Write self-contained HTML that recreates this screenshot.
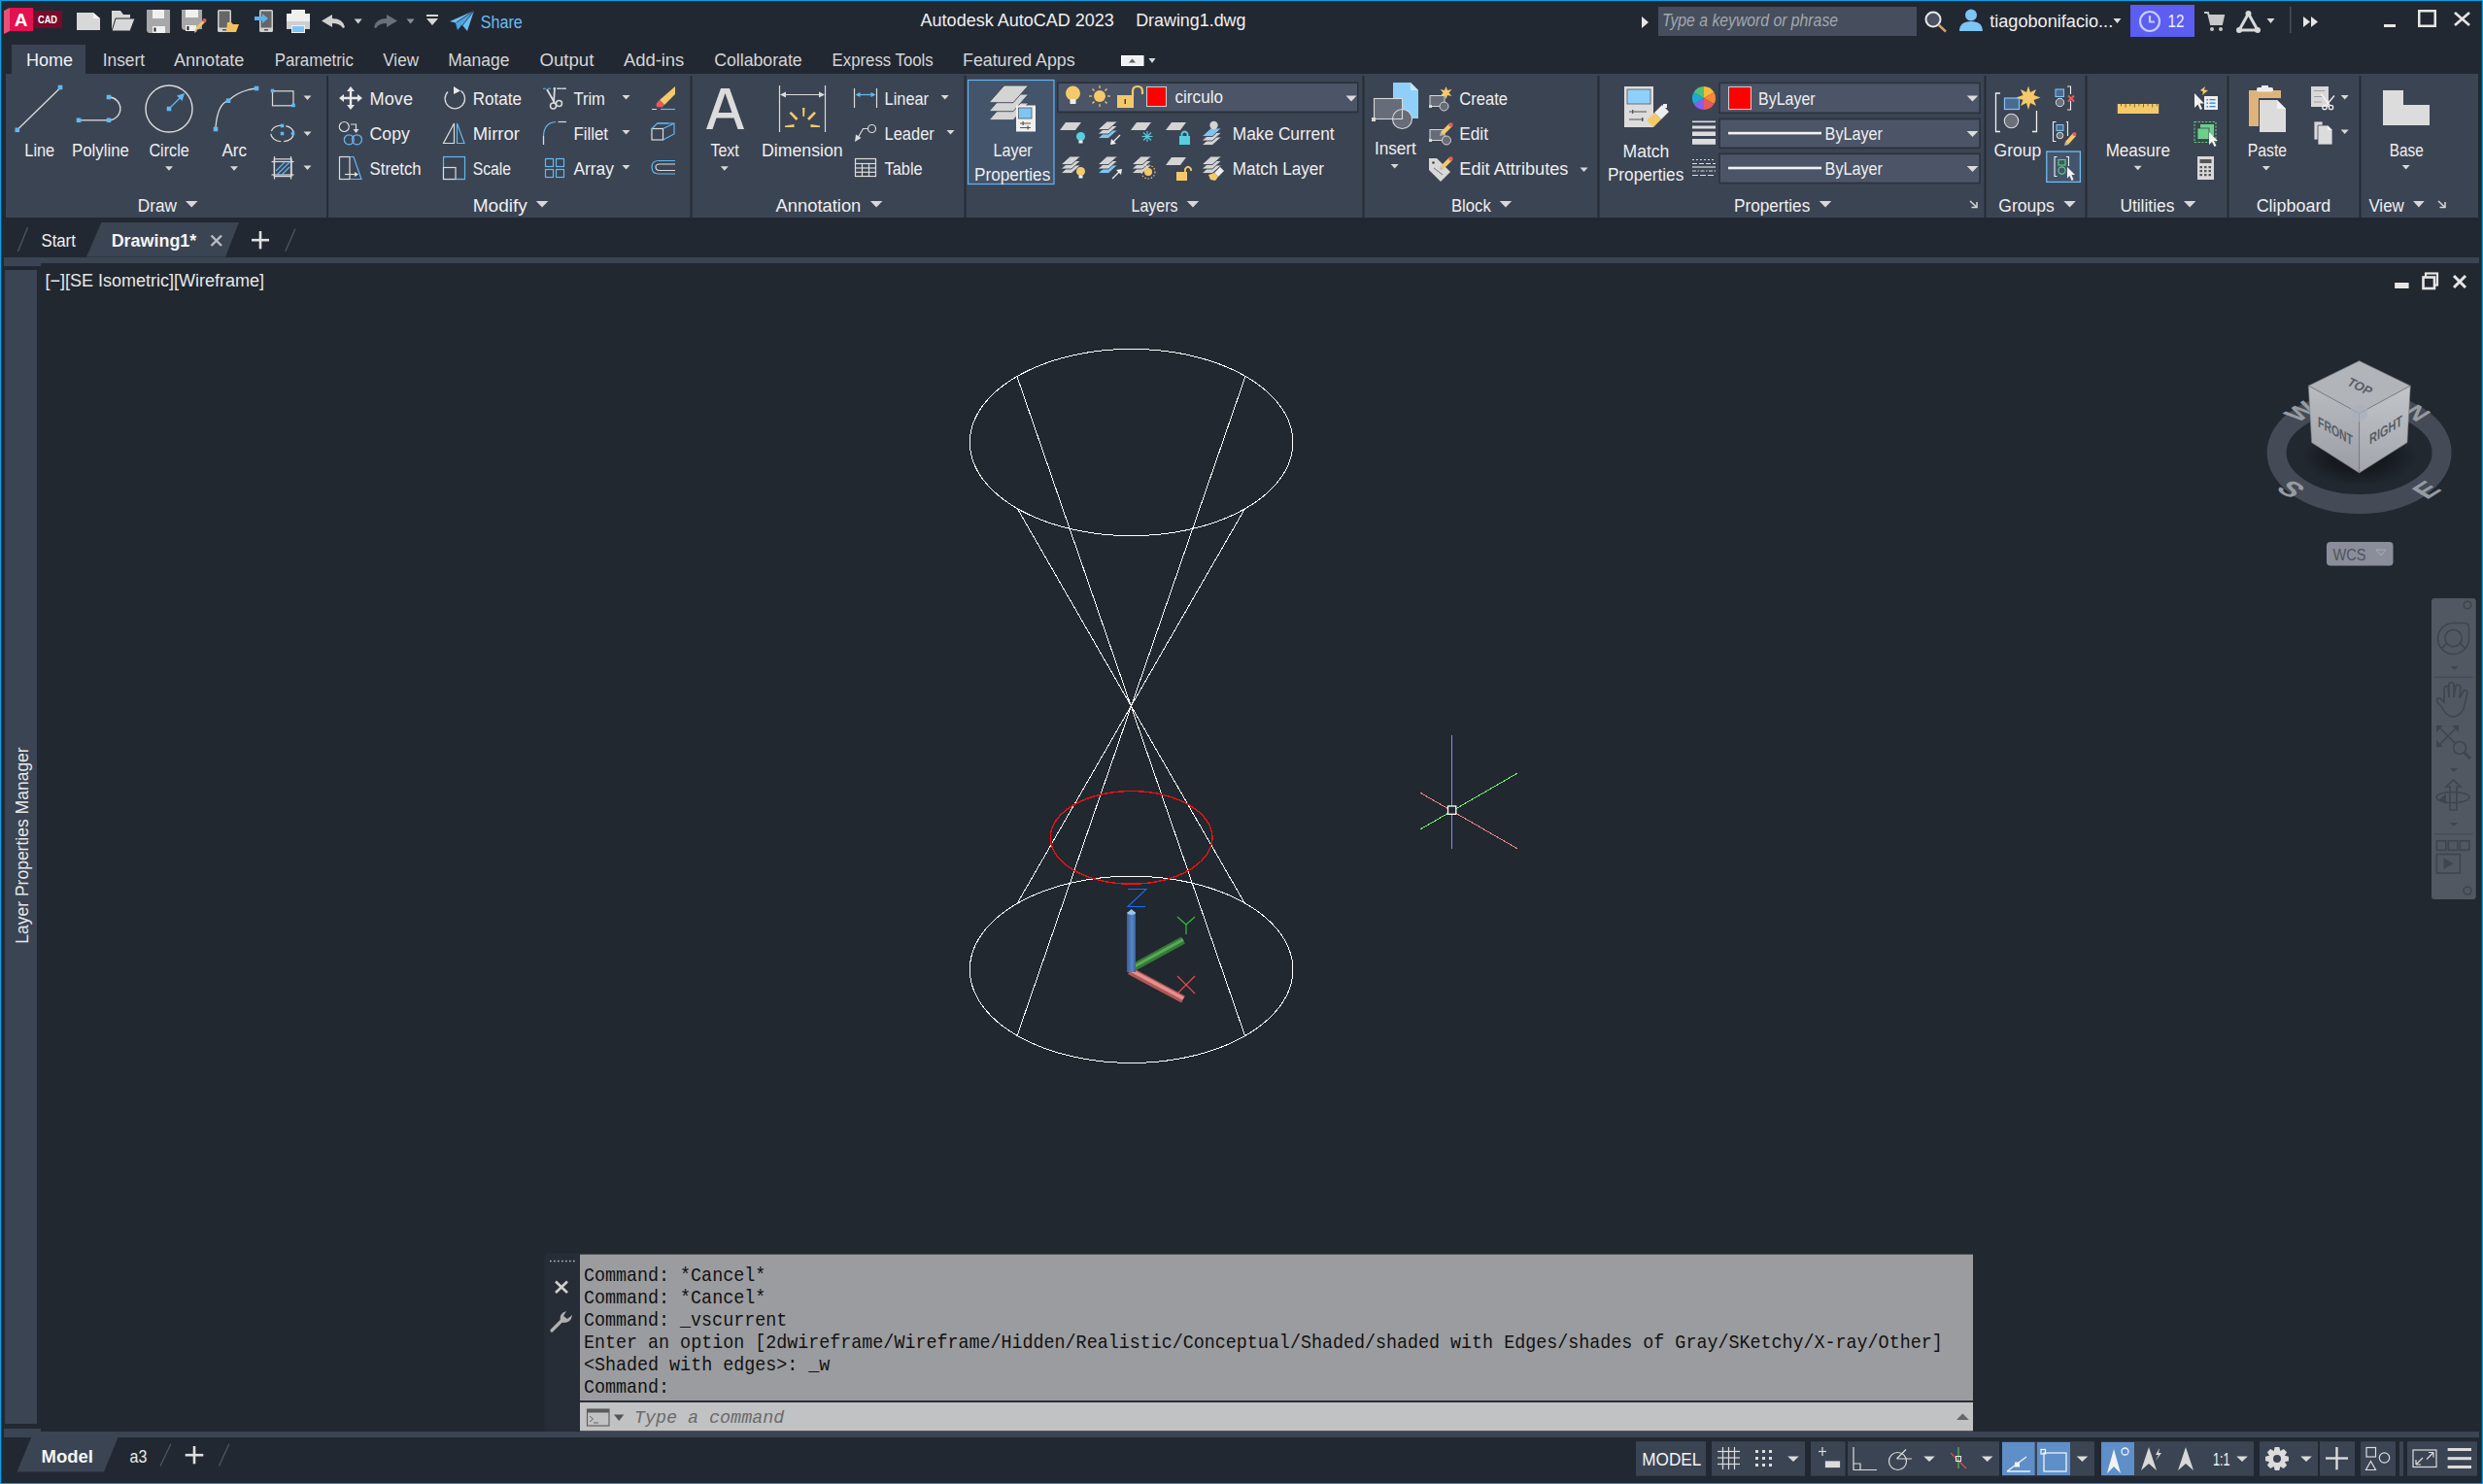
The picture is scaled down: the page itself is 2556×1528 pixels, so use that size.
<!DOCTYPE html>
<html><head><meta charset="utf-8"><style>
html,body{margin:0;padding:0;width:2556px;height:1528px;overflow:hidden;background:#222832;}
svg{display:block}
</style></head><body>
<svg width="2556" height="1528" viewBox="0 0 2556 1528">
<rect x="0" y="0" width="2556" height="1528" fill="#222832" />
<rect x="42" y="274" width="2512" height="1197" fill="#212830" />
<rect x="6" y="76" width="2545" height="148" fill="#3b4453" />
<rect x="12" y="46" width="76" height="30" fill="#3b4453" />
<rect x="4" y="265" width="2548" height="6" fill="#3b4453" />
<rect x="4" y="271" width="38" height="3" fill="#3b4453" />
<rect x="5" y="278" width="33" height="1188" fill="#3b4453" />
<rect x="4" y="1471" width="38" height="3" fill="#3b4453" />
<rect x="4" y="1474" width="2548" height="6" fill="#3b4453" />
<rect x="0" y="0" width="2556" height="1" fill="#0aa0e8" />
<rect x="0" y="0" width="1.2" height="1528" fill="#0aa0e8" />
<rect x="2554.8" y="0" width="1.2" height="1528" fill="#0aa0e8" />
<rect x="0" y="1527" width="2556" height="1" fill="#0aa0e8" />
<g transform="translate(3,7)">
<polygon points="1,4 7,1 7,25 1,28" fill="#e8507a"/>
<rect x="7" y="1" width="24" height="24" fill="#e3114f"/>
<rect x="31" y="4" width="30" height="18" fill="#790a2a"/>
<text x="18.7" y="19.7" font-family="Liberation Sans" font-weight="bold" font-size="19" fill="#fff" text-anchor="middle">A</text>
<text x="46" y="16.7" font-family="Liberation Sans" font-weight="bold" font-size="10" fill="#fff" text-anchor="middle" textLength="20" lengthAdjust="spacingAndGlyphs">CAD</text>
</g>
<g transform="translate(79,13)"><polygon points="0,0 17,0 24,6 24,18 0,18" fill="#d8d8d8"/><polygon points="17,0 24,6 17,6" fill="#f2f2f2"/></g>
<g transform="translate(115,11)"><polygon points="0,0 9,0 12,4 19,4 19,8 0,21" fill="#d8d8d8"/><polygon points="4,8 24,8 19,21 0,21" fill="#d8d8d8" stroke="#222832" stroke-width="1"/></g>
<g transform="translate(151,10)"><polygon points="0,0 24,0 24,24 2,24 0,22" fill="#a8a8a8"/><rect x="6" y="0" width="12" height="9" fill="#f0f0f0"/><rect x="6" y="17" width="13" height="7" fill="#f0f0f0"/><rect x="7.5" y="18.5" width="2" height="4" fill="#222"/></g>
<g transform="translate(187,10)"><polygon points="0,0 21,0 21,20 2,21 0,19" fill="#a8a8a8"/><rect x="4" y="0" width="13" height="8" fill="#f0f0f0"/><rect x="4" y="16" width="11" height="6" fill="#f0f0f0"/><rect x="5.5" y="17" width="2" height="4" fill="#222"/><polygon points="13,23 15,18 23,10 25,12 17,20" fill="#f2c462"/><circle cx="23.5" cy="11" r="2" fill="#e85a5a"/><polygon points="13,24 14,20 16,22" fill="#bbb"/></g>
<g transform="translate(224,10)"><rect x="0" y="0" width="14" height="23" rx="1.5" fill="#cfcfcf"/><rect x="1.5" y="1.5" width="11" height="17" fill="#666"/><rect x="5" y="20" width="4" height="1.5" fill="#555"/><polygon points="10,13 14,13 16,15 22,15 19,23 9,23" fill="#f4c15f"/></g>
<g transform="translate(262,10)"><rect x="5" y="0" width="14" height="23" rx="1.5" fill="#cfcfcf"/><rect x="6.5" y="1.5" width="11" height="17" fill="#666"/><rect x="10" y="20" width="4" height="1.5" fill="#555"/><polygon points="0,7 8,7 8,4 14,9 8,14 8,11 0,11" fill="#5ab4ee"/></g>
<g transform="translate(295,10)"><rect x="5" y="0" width="14" height="6" fill="#f0f0f0"/><rect x="0" y="4" width="24" height="9" fill="#f0f0f0"/><rect x="0" y="12" width="24" height="8" fill="#cfcfcf"/><rect x="5" y="16" width="14" height="8" fill="#f0f0f0"/><rect x="6" y="17" width="12" height="6" fill="#7cc5f5"/></g>
<g transform="translate(331,15)"><path d="M0,6.5 L11,0 L11,4 Q22,4 24,13 L22,14 Q19,9 11,9 L11,13 Z" fill="#d0d0d0"/></g>
<polygon points="364.7,19.6 372.7,19.6 368.7,24.6" fill="#cfcfcf"/>
<g transform="translate(385,15)"><path d="M24,6.5 L13,0 L13,4 Q2,4 0,13 L2,14 Q5,9 13,9 L13,13 Z" fill="#6b6f77"/></g>
<polygon points="418.6,19.6 426.6,19.6 422.6,24.6" fill="#8b8e94"/>
<g transform="translate(439,15)"><rect x="0" y="0" width="12" height="2" fill="#d8d8d8"/><polygon points="0,4 12,4 6,11" fill="#d8d8d8"/></g>
<g transform="translate(463,11)"><polygon points="0,11 25,0 18,21 12,14" fill="#6cbdf3"/><polygon points="6,13 25,0 8,20" fill="#4aa4e0"/><polyline points="7,12 25,0 10,19" fill="none" stroke="#222832" stroke-width="0.8"/></g>
<text x="494.70" y="29" font-family="Liberation Sans" font-size="18" fill="#6cbdf3" font-weight="normal" font-style="normal" textLength="43.08" lengthAdjust="spacingAndGlyphs" >Share</text>
<text x="947.60" y="27" font-family="Liberation Sans" font-size="18" fill="#f0f0f0" font-weight="normal" font-style="normal" textLength="199.17" lengthAdjust="spacingAndGlyphs" >Autodesk AutoCAD 2023</text>
<text x="1169.20" y="27" font-family="Liberation Sans" font-size="18" fill="#f0f0f0" font-weight="normal" font-style="normal" textLength="113.23" lengthAdjust="spacingAndGlyphs" >Drawing1.dwg</text>
<g transform="translate(1690,17)"><polygon points="0,0 7,6 0,12" fill="#e6e6e6"/></g>
<rect x="1707" y="7" width="266" height="30" fill="#464e5d" />
<text x="1711.00" y="27" font-family="Liberation Sans" font-size="18" fill="#a3a7ae" font-weight="normal" font-style="italic" textLength="181.03" lengthAdjust="spacingAndGlyphs" >Type a keyword or phrase</text>
<g transform="translate(1981,11)"><circle cx="9" cy="9" r="7.5" fill="#4b5260" stroke="#e8e8e8" stroke-width="2"/><line x1="14.5" y1="14.5" x2="22" y2="21.5" stroke="#d4a16a" stroke-width="2.4"/></g>
<g transform="translate(2017,9)"><circle cx="12" cy="6.5" r="6" fill="#7cc5f5"/><path d="M0,23 Q0,13 12,13 Q24,13 24,23 Z" fill="#7cc5f5"/></g>
<text x="2048.20" y="28" font-family="Liberation Sans" font-size="18" fill="#f0f0f0" font-weight="normal" font-style="normal" textLength="127.00" lengthAdjust="spacingAndGlyphs" >tiagobonifacio...</text>
<polygon points="2175.5,19 2183.5,19 2179.5,24" fill="#e0e0e0"/>
<rect x="2193" y="5" width="66" height="33" fill="#5b5ef0" />
<g transform="translate(2201,10)"><circle cx="12" cy="12" r="10" fill="none" stroke="#c8cbff" stroke-width="2.2"/><polyline points="12,6 12,12.5 17,12.5" fill="none" stroke="#c8cbff" stroke-width="2.2"/></g>
<text x="2231.50" y="28" font-family="Liberation Sans" font-size="18" fill="#f0f0ff" font-weight="normal" font-style="normal" textLength="16.84" lengthAdjust="spacingAndGlyphs" >12</text>
<g transform="translate(2269,12)"><path d="M0,1 L4,1 L7,13 L18,13 L20,4 L5,4" fill="none" stroke="#c8c8c8" stroke-width="2"/><rect x="6" y="5" width="13" height="7" fill="#c8c8c8"/><circle cx="8" cy="18" r="2" fill="#c8c8c8"/><circle cx="17" cy="18" r="2" fill="#c8c8c8"/></g>
<g transform="translate(2302,11)"><path d="M12.5,3 L3,20 L22,20 Z" fill="none" stroke="#d8d8d8" stroke-width="3" stroke-linejoin="round"/><circle cx="12.5" cy="3" r="3" fill="#d8d8d8"/><circle cx="3" cy="20" r="3" fill="#d8d8d8"/><circle cx="22" cy="20" r="3" fill="#d8d8d8"/></g>
<polygon points="2333.5,19 2341.5,19 2337.5,24" fill="#d8d8d8"/>
<rect x="2357" y="7" width="1.5" height="27" fill="#4a505b" />
<g transform="translate(2371,17)"><polygon points="0,0 7,5.5 0,11" fill="#e6e6e6"/><polygon points="8,0 15,5.5 8,11" fill="#e6e6e6"/></g>
<rect x="2454" y="25" width="12" height="3" fill="#e6e6e6" />
<g transform="translate(2489,10)"><rect x="1.25" y="1.25" width="16.5" height="15.5" fill="none" stroke="#e6e6e6" stroke-width="2.5"/></g>
<g transform="translate(2526,12)"><line x1="1" y1="1" x2="16" y2="14" stroke="#e6e6e6" stroke-width="2.6"/><line x1="16" y1="1" x2="1" y2="14" stroke="#e6e6e6" stroke-width="2.6"/></g>
<text x="27.00" y="68" font-family="Liberation Sans" font-size="18" fill="#f2f2f2" font-weight="normal" font-style="normal" textLength="47.96" lengthAdjust="spacingAndGlyphs" >Home</text>
<text x="105.70" y="68" font-family="Liberation Sans" font-size="18" fill="#d6d6d6" font-weight="normal" font-style="normal" textLength="43.32" lengthAdjust="spacingAndGlyphs" >Insert</text>
<text x="179.00" y="68" font-family="Liberation Sans" font-size="18" fill="#d6d6d6" font-weight="normal" font-style="normal" textLength="72.27" lengthAdjust="spacingAndGlyphs" >Annotate</text>
<text x="282.70" y="68" font-family="Liberation Sans" font-size="18" fill="#d6d6d6" font-weight="normal" font-style="normal" textLength="81.29" lengthAdjust="spacingAndGlyphs" >Parametric</text>
<text x="394.30" y="68" font-family="Liberation Sans" font-size="18" fill="#d6d6d6" font-weight="normal" font-style="normal" textLength="36.69" lengthAdjust="spacingAndGlyphs" >View</text>
<text x="461.30" y="68" font-family="Liberation Sans" font-size="18" fill="#d6d6d6" font-weight="normal" font-style="normal" textLength="63.18" lengthAdjust="spacingAndGlyphs" >Manage</text>
<text x="555.40" y="68" font-family="Liberation Sans" font-size="18" fill="#d6d6d6" font-weight="normal" font-style="normal" textLength="55.94" lengthAdjust="spacingAndGlyphs" >Output</text>
<text x="641.90" y="68" font-family="Liberation Sans" font-size="18" fill="#d6d6d6" font-weight="normal" font-style="normal" textLength="62.41" lengthAdjust="spacingAndGlyphs" >Add-ins</text>
<text x="735.20" y="68" font-family="Liberation Sans" font-size="18" fill="#d6d6d6" font-weight="normal" font-style="normal" textLength="90.49" lengthAdjust="spacingAndGlyphs" >Collaborate</text>
<text x="856.60" y="68" font-family="Liberation Sans" font-size="18" fill="#d6d6d6" font-weight="normal" font-style="normal" textLength="104.13" lengthAdjust="spacingAndGlyphs" >Express Tools</text>
<text x="991.10" y="68" font-family="Liberation Sans" font-size="18" fill="#d6d6d6" font-weight="normal" font-style="normal" textLength="115.49" lengthAdjust="spacingAndGlyphs" >Featured Apps</text>
<rect x="1154" y="57" width="23.5" height="11" fill="#ffffff" />
<rect x="1155.2" y="58.2" width="21.1" height="8.6" fill="#f0f0f0" />
<g transform="translate(1162,60.5)"><polygon points="0,4 7,4 3.5,0" fill="#606060"/></g>
<polygon points="1182.5,60 1189.5,60 1186,65" fill="#d8d8d8"/>
<rect x="336" y="78" width="2" height="146" fill="#262b35" />
<rect x="710.5" y="78" width="2" height="146" fill="#262b35" />
<rect x="992.5" y="78" width="2" height="146" fill="#262b35" />
<rect x="1402.5" y="78" width="2" height="146" fill="#262b35" />
<rect x="1644.5" y="78" width="2" height="146" fill="#262b35" />
<rect x="2042.5" y="78" width="2" height="146" fill="#262b35" />
<rect x="2146.5" y="78" width="2" height="146" fill="#262b35" />
<rect x="2292.5" y="78" width="2" height="146" fill="#262b35" />
<rect x="2428.5" y="78" width="2" height="146" fill="#262b35" />
<text x="141.80" y="218" font-family="Liberation Sans" font-size="18" fill="#efefef" font-weight="normal" font-style="normal" textLength="40.18" lengthAdjust="spacingAndGlyphs" >Draw</text>
<g transform="translate(191,207)"><polygon points="0,0 12.5,0 6.25,6.5" fill="#d8d8d8"/></g>

<line x1="19" y1="132.5" x2="61" y2="91.5" stroke="#dcdcdc" stroke-width="1.3"/><rect x="15.5" y="131.5" width="4.6" height="4.6" fill="#62b8f0"/><rect x="59.7" y="87.7" width="4.6" height="4.6" fill="#62b8f0"/>
<line x1="82" y1="123.8" x2="111" y2="123.8" stroke="#dcdcdc" stroke-width="1.3"/><path d="M113,100 A12.5,12 0 0 1 113,123.8" fill="none" stroke="#dcdcdc" stroke-width="1.3"/><rect x="78.7" y="121.5" width="4.6" height="4.6" fill="#62b8f0"/><rect x="109.7" y="121.5" width="4.6" height="4.6" fill="#62b8f0"/><rect x="109.7" y="97.7" width="4.6" height="4.6" fill="#62b8f0"/>
<circle cx="174" cy="112" r="24" fill="none" stroke="#dcdcdc" stroke-width="1.4"/><rect x="171.7" y="109.7" width="4.6" height="4.6" fill="#62b8f0"/><line x1="176" y1="110" x2="186" y2="100" stroke="#62b8f0" stroke-width="1.3"/><polygon points="190,96 187.5,104 182,98.5" fill="#62b8f0"/>
<path d="M222,131 Q224,107 235,103.7 Q246,93 264,91" fill="none" stroke="#dcdcdc" stroke-width="1.3"/><rect x="219.7" y="130.7" width="4.6" height="4.6" fill="#62b8f0"/><rect x="232.7" y="101.4" width="4.6" height="4.6" fill="#62b8f0"/><rect x="261.7" y="88.7" width="4.6" height="4.6" fill="#62b8f0"/>
<rect x="280.5" y="93.8" width="21.5" height="15" fill="none" stroke="#dcdcdc" stroke-width="1.2"/><rect x="278.7" y="91.7" width="3.6" height="3.6" fill="#62b8f0"/><rect x="300.2" y="106.7" width="3.6" height="3.6" fill="#62b8f0"/>
<ellipse cx="290.5" cy="137.5" rx="11.7" ry="8.3" fill="none" stroke="#dcdcdc" stroke-width="1.2" stroke-dasharray="14,3"/><rect x="288.75" y="127.75" width="3.5" height="3.5" fill="#62b8f0"/><rect x="288.75" y="135.75" width="3.5" height="3.5" fill="#62b8f0"/><rect x="299.75" y="135.75" width="3.5" height="3.5" fill="#62b8f0"/>
<rect x="282.3" y="163.8" width="17.8" height="17.8" fill="none" stroke="#dcdcdc" stroke-width="1.2"/><line x1="279.5" y1="166.5" x2="302.5" y2="166.5" stroke="#dcdcdc" stroke-width="1.2"/><line x1="279.5" y1="180" x2="302.5" y2="180" stroke="#dcdcdc" stroke-width="1.2"/><line x1="282.5" y1="161" x2="282.5" y2="184.5" stroke="#dcdcdc" stroke-width="1.2"/><line x1="299.5" y1="161" x2="299.5" y2="184.5" stroke="#dcdcdc" stroke-width="1.2"/>
<path d="M284,176 L293,167 M285,180 L298,167 M290,180 L298,172" stroke="#62b8f0" stroke-width="1.2"/>

<text x="25.30" y="161" font-family="Liberation Sans" font-size="18" fill="#efefef" font-weight="normal" font-style="normal" textLength="30.91" lengthAdjust="spacingAndGlyphs" >Line</text>
<text x="74.00" y="161" font-family="Liberation Sans" font-size="18" fill="#efefef" font-weight="normal" font-style="normal" textLength="58.94" lengthAdjust="spacingAndGlyphs" >Polyline</text>
<text x="153.40" y="161" font-family="Liberation Sans" font-size="18" fill="#efefef" font-weight="normal" font-style="normal" textLength="41.41" lengthAdjust="spacingAndGlyphs" >Circle</text>
<text x="228.50" y="161" font-family="Liberation Sans" font-size="18" fill="#efefef" font-weight="normal" font-style="normal" textLength="25.50" lengthAdjust="spacingAndGlyphs" >Arc</text>
<polygon points="170.0,171.2 178.0,171.2 174,175.7" fill="#d8d8d8"/>
<polygon points="237.0,171.2 245.0,171.2 241,175.7" fill="#d8d8d8"/>
<polygon points="312.5,98.5 320.5,98.5 316.5,103.0" fill="#d8d8d8"/>
<polygon points="312.5,135.5 320.5,135.5 316.5,140.0" fill="#d8d8d8"/>
<polygon points="312.5,170.5 320.5,170.5 316.5,175.0" fill="#d8d8d8"/>
<text x="486.70" y="218" font-family="Liberation Sans" font-size="18" fill="#efefef" font-weight="normal" font-style="normal" textLength="56.11" lengthAdjust="spacingAndGlyphs" >Modify</text>
<g transform="translate(551.8,207)"><polygon points="0,0 12.5,0 6.25,6.5" fill="#d8d8d8"/></g>
<text x="380.60" y="108" font-family="Liberation Sans" font-size="18" fill="#efefef" font-weight="normal" font-style="normal" textLength="44.41" lengthAdjust="spacingAndGlyphs" >Move</text>
<text x="380.60" y="144" font-family="Liberation Sans" font-size="18" fill="#efefef" font-weight="normal" font-style="normal" textLength="41.29" lengthAdjust="spacingAndGlyphs" >Copy</text>
<text x="380.60" y="180" font-family="Liberation Sans" font-size="18" fill="#efefef" font-weight="normal" font-style="normal" textLength="53.07" lengthAdjust="spacingAndGlyphs" >Stretch</text>
<text x="486.70" y="108" font-family="Liberation Sans" font-size="18" fill="#efefef" font-weight="normal" font-style="normal" textLength="50.32" lengthAdjust="spacingAndGlyphs" >Rotate</text>
<text x="486.70" y="144" font-family="Liberation Sans" font-size="18" fill="#efefef" font-weight="normal" font-style="normal" textLength="48.31" lengthAdjust="spacingAndGlyphs" >Mirror</text>
<text x="486.70" y="180" font-family="Liberation Sans" font-size="18" fill="#efefef" font-weight="normal" font-style="normal" textLength="39.32" lengthAdjust="spacingAndGlyphs" >Scale</text>
<text x="590.40" y="108" font-family="Liberation Sans" font-size="18" fill="#efefef" font-weight="normal" font-style="normal" textLength="32.53" lengthAdjust="spacingAndGlyphs" >Trim</text>
<text x="590.40" y="144" font-family="Liberation Sans" font-size="18" fill="#efefef" font-weight="normal" font-style="normal" textLength="35.62" lengthAdjust="spacingAndGlyphs" >Fillet</text>
<text x="590.40" y="180" font-family="Liberation Sans" font-size="18" fill="#efefef" font-weight="normal" font-style="normal" textLength="41.49" lengthAdjust="spacingAndGlyphs" >Array</text>
<polygon points="640.5,98 648.5,98 644.5,102.5" fill="#d8d8d8"/>
<polygon points="640.5,134 648.5,134 644.5,138.5" fill="#d8d8d8"/>
<polygon points="640.5,170 648.5,170 644.5,174.5" fill="#d8d8d8"/>

<path d="M361,89 L365,94 L362.2,94 L362.2,99.8 L368,99.8 L368,97 L373,101 L368,105 L368,102.2 L362.2,102.2 L362.2,108 L365,108 L361,113 L357,108 L359.8,108 L359.8,102.2 L354,102.2 L354,105 L349,101 L354,97 L354,99.8 L359.8,99.8 L359.8,94 L357,94 Z" fill="#e8e8e8"/>
<circle cx="354.3" cy="130.5" r="5" fill="none" stroke="#dcdcdc" stroke-width="1.2"/><path d="M361,128 L366.5,128 L366.5,134" fill="none" stroke="#dcdcdc" stroke-width="1.2"/><polygon points="363.5,133 369.5,133 366.5,137" fill="#dcdcdc"/>
<circle cx="359.3" cy="143.8" r="5" fill="none" stroke="#62b8f0" stroke-width="1.3"/><circle cx="367.5" cy="143.8" r="5" fill="none" stroke="#62b8f0" stroke-width="1.3"/>
<rect x="349.5" y="161.5" width="10.5" height="23" fill="none" stroke="#dcdcdc" stroke-width="1.2"/><path d="M360,161.5 L364,161.5 L372,184.5 L360,184.5" fill="none" stroke="#62b8f0" stroke-width="1.2"/><path d="M355,179.5 L366,179.5" stroke="#dcdcdc" stroke-width="1.2"/><polygon points="365,177 369,179.5 365,182" fill="#dcdcdc"/>
<path d="M474.5,93.5 A10.2,10.2 0 1 1 461,94.5" fill="none" stroke="#dcdcdc" stroke-width="1.3"/><polygon points="467,89 474,93.5 467,97" fill="#e8e8e8"/>
<polygon points="467.5,127 467.5,147.5 456.5,147.5" fill="none" stroke="#dcdcdc" stroke-width="1.2"/><polygon points="470.5,127 470.5,147.5 478,147.5" fill="none" stroke="#62b8f0" stroke-width="1.2"/>
<rect x="456.5" y="161.5" width="22" height="23" fill="none" stroke="#62b8f0" stroke-width="1.2"/><rect x="456.5" y="172.5" width="12.5" height="12" fill="#3b4453" stroke="#dcdcdc" stroke-width="1.2"/><line x1="469" y1="184.5" x2="478.5" y2="184.5" stroke="#62b8f0" stroke-width="1.2"/>
<line x1="559" y1="91.2" x2="583" y2="91.2" stroke="#62b8f0" stroke-width="1.1" stroke-dasharray="3,2"/><line x1="573" y1="91.2" x2="583" y2="91.2" stroke="#dcdcdc" stroke-width="1.2"/>
<path d="M563,92 L571,106 M571,90 L570,106" stroke="#dcdcdc" stroke-width="1.8"/><circle cx="569.5" cy="109" r="3" fill="none" stroke="#dcdcdc" stroke-width="1.5"/><circle cx="575.5" cy="106.5" r="3" fill="none" stroke="#dcdcdc" stroke-width="1.5"/>
<path d="M559.5,148.5 L559.5,140 Q560,126.5 572,125.5" fill="none" stroke="#62b8f0" stroke-width="1.2"/><line x1="574.5" y1="125.5" x2="583" y2="125.5" stroke="#dcdcdc" stroke-width="1.2"/><line x1="559.5" y1="140" x2="559.5" y2="149" stroke="#dcdcdc" stroke-width="1.2"/>
<rect x="561.5" y="163.5" width="8" height="8" fill="none" stroke="#62b8f0" stroke-width="1.2"/><rect x="572.5" y="163.5" width="8" height="8" fill="none" stroke="#62b8f0" stroke-width="1.2"/><rect x="561.5" y="174.5" width="8" height="8" fill="none" stroke="#62b8f0" stroke-width="1.2"/><rect x="572.5" y="174.5" width="8" height="8" fill="none" stroke="#62b8f0" stroke-width="1.2"/>
<polygon points="695,89 695,97 684,108 679,103" fill="#f5c96a"/><polygon points="679,103 684,108 681,111 676,106" fill="#e85a5a"/><circle cx="678" cy="108" r="2.5" fill="#e85a5a"/><line x1="671" y1="112.5" x2="676" y2="112.5" stroke="#dcdcdc" stroke-width="1"/><line x1="680" y1="112.5" x2="695" y2="112.5" stroke="#62b8f0" stroke-width="1.2"/>
<rect x="671" y="132.5" width="11.5" height="11.5" fill="none" stroke="#dcdcdc" stroke-width="1.2"/><path d="M671,132.5 L676.5,127 L694,127 L694,138 L682.5,144 M682.5,132.5 L694,127" fill="none" stroke="#62b8f0" stroke-width="1.2"/><line x1="676.5" y1="127" x2="688" y2="127" stroke="#62b8f0" stroke-width="1.2"/>
<path d="M695,165.5 L678,165.5 Q671,165.5 671,172 Q671,179 678,179 L695,179" fill="none" stroke="#62b8f0" stroke-width="1.2"/><path d="M695,169 L679,169 Q675,169 675,172 Q675,175.5 679,175.5 L695,175.5" fill="none" stroke="#dcdcdc" stroke-width="1.2"/>

<text x="798.60" y="218" font-family="Liberation Sans" font-size="18" fill="#efefef" font-weight="normal" font-style="normal" textLength="87.73" lengthAdjust="spacingAndGlyphs" >Annotation</text>
<g transform="translate(895.9,207)"><polygon points="0,0 12.5,0 6.25,6.5" fill="#d8d8d8"/></g>
<text x="731.40" y="161" font-family="Liberation Sans" font-size="18" fill="#efefef" font-weight="normal" font-style="normal" textLength="29.38" lengthAdjust="spacingAndGlyphs" >Text</text>
<text x="783.90" y="161" font-family="Liberation Sans" font-size="18" fill="#efefef" font-weight="normal" font-style="normal" textLength="83.79" lengthAdjust="spacingAndGlyphs" >Dimension</text>
<polygon points="741.8,171.2 749.8,171.2 745.8,175.7" fill="#d8d8d8"/>
<text x="910.60" y="108" font-family="Liberation Sans" font-size="18" fill="#efefef" font-weight="normal" font-style="normal" textLength="45.40" lengthAdjust="spacingAndGlyphs" >Linear</text>
<text x="910.60" y="144" font-family="Liberation Sans" font-size="18" fill="#efefef" font-weight="normal" font-style="normal" textLength="51.18" lengthAdjust="spacingAndGlyphs" >Leader</text>
<text x="910.60" y="180" font-family="Liberation Sans" font-size="18" fill="#efefef" font-weight="normal" font-style="normal" textLength="39.11" lengthAdjust="spacingAndGlyphs" >Table</text>
<polygon points="968.7,98 976.7,98 972.7,102.5" fill="#d8d8d8"/>
<polygon points="974.5,134 982.5,134 978.5,138.5" fill="#d8d8d8"/>

<polygon points="727,133 742,91 751,91 766,133 759.5,133 755.5,121.5 737.5,121.5 733.5,133" fill="#dcdcdc"/><polygon points="739.5,116 753.5,116 746.5,96" fill="#3b4453"/>
<line x1="802.5" y1="88" x2="802.5" y2="136" stroke="#dcdcdc" stroke-width="1.2"/><line x1="849.5" y1="88" x2="849.5" y2="136" stroke="#dcdcdc" stroke-width="1.2"/><line x1="805" y1="97.5" x2="847" y2="97.5" stroke="#dcdcdc" stroke-width="1.2"/><polygon points="803,97.5 809,94.5 809,100.5" fill="#dcdcdc"/><polygon points="849,97.5 843,94.5 843,100.5" fill="#dcdcdc"/>
<polygon points="826,111 828.5,111 828,120 826.5,120" fill="#f5c96a"/><polygon points="812.5,116.5 814.5,115 821.5,122 819.5,124" fill="#f5c96a"/><polygon points="838,115 840,116.5 833,124 831,122" fill="#f5c96a"/><polygon points="808,129.5 817.5,128 817.5,131 808,131" fill="#f5c96a"/><polygon points="834.5,128 844,129.5 844,131 834.5,131" fill="#f5c96a"/>
<line x1="879.5" y1="91" x2="879.5" y2="111" stroke="#dcdcdc" stroke-width="1.2"/><line x1="902.5" y1="91" x2="902.5" y2="111" stroke="#dcdcdc" stroke-width="1.2"/><line x1="882" y1="97.5" x2="900" y2="97.5" stroke="#62b8f0" stroke-width="1.3"/><polygon points="880.5,97.5 885.5,95 885.5,100" fill="#62b8f0"/><polygon points="901.5,97.5 896.5,95 896.5,100" fill="#62b8f0"/>
<circle cx="897.5" cy="132.5" r="4" fill="none" stroke="#dcdcdc" stroke-width="1.2"/><path d="M893.5,132.5 L888.5,132.5 L883,142" fill="none" stroke="#dcdcdc" stroke-width="1.2"/><polygon points="880,146 881,138.5 886.5,142" fill="#dcdcdc"/>
<rect x="880.5" y="163.5" width="21" height="18" fill="none" stroke="#dcdcdc" stroke-width="1.2"/><line x1="880.5" y1="168.5" x2="901.5" y2="168.5" stroke="#dcdcdc" stroke-width="1.2"/><line x1="880.5" y1="173" x2="901.5" y2="173" stroke="#dcdcdc" stroke-width="1.2"/><line x1="880.5" y1="177.3" x2="901.5" y2="177.3" stroke="#dcdcdc" stroke-width="1.2"/><line x1="887.5" y1="168.5" x2="887.5" y2="181.5" stroke="#dcdcdc" stroke-width="1.2"/><line x1="894.5" y1="168.5" x2="894.5" y2="181.5" stroke="#dcdcdc" stroke-width="1.2"/>

<text x="1164.60" y="218" font-family="Liberation Sans" font-size="18" fill="#efefef" font-weight="normal" font-style="normal" textLength="47.82" lengthAdjust="spacingAndGlyphs" >Layers</text>
<g transform="translate(1221.7,207)"><polygon points="0,0 12.5,0 6.25,6.5" fill="#d8d8d8"/></g>
<rect x="996.5" y="82.5" width="88.5" height="107" fill="#43546b" stroke="#5eb0ec" stroke-width="1.3"/>
<text x="1022.50" y="161" font-family="Liberation Sans" font-size="18" fill="#efefef" font-weight="normal" font-style="normal" textLength="40.23" lengthAdjust="spacingAndGlyphs" >Layer</text>
<text x="1003.00" y="186" font-family="Liberation Sans" font-size="18" fill="#efefef" font-weight="normal" font-style="normal" textLength="78.26" lengthAdjust="spacingAndGlyphs" >Properties</text>

<polygon points="1033.7,106 1058.7,106 1043,123.7 1018,123.7" fill="#d4d4d4" stroke="#3b4453" stroke-width="0.9"/><polygon points="1033.7,97 1058.7,97 1043,114.7 1018,114.7" fill="#d4d4d4" stroke="#3b4453" stroke-width="0.9"/><polygon points="1033.7,88 1058.7,88 1043,105.7 1018,105.7" fill="#d4d4d4" stroke="#3b4453" stroke-width="0.9"/>
<rect x="1046" y="108.5" width="20" height="27" fill="#efefef"/><rect x="1048.5" y="111" width="13.5" height="11" fill="#7cc5f5" stroke="#555" stroke-width="0.8"/><line x1="1050" y1="127" x2="1061" y2="127" stroke="#555" stroke-width="1"/><line x1="1050" y1="131.5" x2="1061" y2="131.5" stroke="#555" stroke-width="1"/><rect x="1052.5" y="125" width="1.2" height="4" fill="#555"/><rect x="1057.5" y="129.5" width="1.2" height="4" fill="#555"/>

<rect x="1088" y="84.3" width="310.5" height="32" fill="#2b313c" />
<rect x="1089.5" y="86" width="307.5" height="28.5" fill="#4b5567" />

<circle cx="1104.5" cy="96" r="7.5" fill="#f5c96a"/><rect x="1101.5" y="102" width="6" height="5" fill="#eee"/>
<circle cx="1132" cy="99" r="6" fill="#f5c96a"/><g stroke="#f5c96a" stroke-width="1.2"><line x1="1132" y1="88" x2="1132" y2="91"/><line x1="1132" y1="107" x2="1132" y2="110"/><line x1="1121" y1="99" x2="1124" y2="99"/><line x1="1140" y1="99" x2="1143" y2="99"/><line x1="1124.5" y1="91.5" x2="1126.5" y2="93.5"/><line x1="1137.5" y1="104.5" x2="1139.5" y2="106.5"/><line x1="1139.5" y1="91.5" x2="1137.5" y2="93.5"/><line x1="1126.5" y1="104.5" x2="1124.5" y2="106.5"/></g>
<rect x="1150" y="98" width="17" height="13" fill="#f5c96a"/><path d="M1166,99 L1166,94 Q1166,89 1171,89 Q1176,89 1176,94 L1176,97" fill="none" stroke="#f5c96a" stroke-width="2.2"/><rect x="1157.5" y="102" width="1.5" height="5" fill="#3b4453"/>
<rect x="1180.5" y="89.5" width="20" height="20" fill="#ff0000" stroke="#cfcfcf" stroke-width="1"/>

<text x="1209.50" y="106" font-family="Liberation Sans" font-size="18" fill="#efefef" font-weight="normal" font-style="normal" textLength="49.50" lengthAdjust="spacingAndGlyphs" >circulo</text>
<polygon points="1385.5,98.5 1396.5,98.5 1391,104.5" fill="#dcdcdc"/>

<polygon points="1097,126 1113,126 1107,134 1091,134" fill="#d4d4d4"/><circle cx="1112.5" cy="140.5" r="4.5" fill="#56d0e0"/><rect x="1110.5" y="144.5" width="4" height="3" fill="#eee"/>
<polygon points="1139.5,134.0 1150.5,134.0 1141,142.5 1130,142.5" fill="#7cc5f5" stroke="#3b4453" stroke-width="0.9"/><polygon points="1139.5,129.5 1150.5,129.5 1141,138.0 1130,138.0" fill="#d4d4d4" stroke="#3b4453" stroke-width="0.9"/><polygon points="1139.5,125.0 1150.5,125.0 1141,133.5 1130,133.5" fill="#d4d4d4" stroke="#3b4453" stroke-width="0.9"/><line x1="1153" y1="139" x2="1145" y2="147" stroke="#eee" stroke-width="1.3"/><polygon points="1143,149 1144,143 1149,148" fill="#eee"/>
<polygon points="1170,126 1185,126 1179,134 1164,134" fill="#d4d4d4"/><g stroke="#56d0e0" stroke-width="1.1"><line x1="1181" y1="135" x2="1181" y2="146"/><line x1="1175.5" y1="140.5" x2="1186.5" y2="140.5"/><line x1="1177" y1="136.5" x2="1185" y2="144.5"/><line x1="1185" y1="136.5" x2="1177" y2="144.5"/></g>
<polygon points="1206,126 1221,126 1215,134 1200,134" fill="#d4d4d4"/><rect x="1214" y="140" width="11" height="9" fill="#56d0e0"/><path d="M1216.5,140 L1216.5,137.5 Q1219.5,133.5 1222.5,137.5 L1222.5,140" fill="none" stroke="#56d0e0" stroke-width="1.8"/>
<polygon points="1246.5,141.0 1257.5,141.0 1248,149.5 1237,149.5" fill="#d4d4d4" stroke="#3b4453" stroke-width="0.9"/><polygon points="1246.5,136.5 1257.5,136.5 1248,145.0 1237,145.0" fill="#d4d4d4" stroke="#3b4453" stroke-width="0.9"/><polygon points="1246.5,132.0 1257.5,132.0 1248,140.5 1237,140.5" fill="#7cc5f5" stroke="#3b4453" stroke-width="0.9"/><circle cx="1249.5" cy="129" r="4.2" fill="#d4d4d4"/>
<polygon points="1101.5,170.0 1112.5,170.0 1103,178.5 1092,178.5" fill="#d4d4d4" stroke="#3b4453" stroke-width="0.9"/><polygon points="1101.5,165.5 1112.5,165.5 1103,174.0 1092,174.0" fill="#d4d4d4" stroke="#3b4453" stroke-width="0.9"/><polygon points="1101.5,161.0 1112.5,161.0 1103,169.5 1092,169.5" fill="#d4d4d4" stroke="#3b4453" stroke-width="0.9"/><circle cx="1112.5" cy="176.5" r="4.5" fill="#f5c96a"/><rect x="1110.5" y="180.5" width="4" height="3" fill="#eee"/>
<polygon points="1139.5,170.0 1150.5,170.0 1141,178.5 1130,178.5" fill="#7cc5f5" stroke="#3b4453" stroke-width="0.9"/><polygon points="1139.5,165.5 1150.5,165.5 1141,174.0 1130,174.0" fill="#d4d4d4" stroke="#3b4453" stroke-width="0.9"/><polygon points="1139.5,161.0 1150.5,161.0 1141,169.5 1130,169.5" fill="#d4d4d4" stroke="#3b4453" stroke-width="0.9"/><line x1="1145" y1="184" x2="1153" y2="176" stroke="#eee" stroke-width="1.3"/><polygon points="1155,174 1154,180 1149,175" fill="#eee"/>
<polygon points="1174.5,170.0 1185.5,170.0 1176,178.5 1165,178.5" fill="#d4d4d4" stroke="#3b4453" stroke-width="0.9"/><polygon points="1174.5,165.5 1185.5,165.5 1176,174.0 1165,174.0" fill="#d4d4d4" stroke="#3b4453" stroke-width="0.9"/><polygon points="1174.5,161.0 1185.5,161.0 1176,169.5 1165,169.5" fill="#d4d4d4" stroke="#3b4453" stroke-width="0.9"/><circle cx="1182" cy="177" r="4" fill="#f5c96a"/><g stroke="#f5c96a" stroke-width="1.1" stroke-dasharray="1.5,1.8"><circle cx="1182" cy="177" r="7" fill="none"/></g>
<polygon points="1206,162 1221,162 1215,170 1200,170" fill="#d4d4d4"/><rect x="1211" y="177" width="11" height="9" fill="#f5c96a"/><path d="M1220,177 L1220,174 Q1223,169.5 1226,174 L1226,176" fill="none" stroke="#f5c96a" stroke-width="1.8"/>
<polygon points="1246.5,170.0 1257.5,170.0 1248,178.5 1237,178.5" fill="#d4d4d4" stroke="#3b4453" stroke-width="0.9"/><polygon points="1246.5,165.5 1257.5,165.5 1248,174.0 1237,174.0" fill="#d4d4d4" stroke="#3b4453" stroke-width="0.9"/><polygon points="1246.5,161.0 1257.5,161.0 1248,169.5 1237,169.5" fill="#d4d4d4" stroke="#3b4453" stroke-width="0.9"/><polygon points="1250,178 1256,172 1260,176 1254,182" fill="#eee"/><polygon points="1244,180 1250,178 1254,182 1251,186 1246,185" fill="#f5c96a"/>

<text x="1268.80" y="144" font-family="Liberation Sans" font-size="18" fill="#efefef" font-weight="normal" font-style="normal" textLength="104.76" lengthAdjust="spacingAndGlyphs" >Make Current</text>
<text x="1268.80" y="180" font-family="Liberation Sans" font-size="18" fill="#efefef" font-weight="normal" font-style="normal" textLength="94.16" lengthAdjust="spacingAndGlyphs" >Match Layer</text>
<text x="1494.00" y="218" font-family="Liberation Sans" font-size="18" fill="#efefef" font-weight="normal" font-style="normal" textLength="40.72" lengthAdjust="spacingAndGlyphs" >Block</text>
<g transform="translate(1543.7,207)"><polygon points="0,0 12.5,0 6.25,6.5" fill="#d8d8d8"/></g>
<text x="1414.90" y="159" font-family="Liberation Sans" font-size="18" fill="#efefef" font-weight="normal" font-style="normal" textLength="42.92" lengthAdjust="spacingAndGlyphs" >Insert</text>
<polygon points="1431.7,169 1439.7,169 1435.7,173.5" fill="#d8d8d8"/>
<text x="1502.30" y="108" font-family="Liberation Sans" font-size="18" fill="#efefef" font-weight="normal" font-style="normal" textLength="49.73" lengthAdjust="spacingAndGlyphs" >Create</text>
<text x="1502.30" y="144" font-family="Liberation Sans" font-size="18" fill="#efefef" font-weight="normal" font-style="normal" textLength="29.67" lengthAdjust="spacingAndGlyphs" >Edit</text>
<text x="1502.30" y="180" font-family="Liberation Sans" font-size="18" fill="#efefef" font-weight="normal" font-style="normal" textLength="112.10" lengthAdjust="spacingAndGlyphs" >Edit Attributes</text>
<polygon points="1626.5,172.5 1634.5,172.5 1630.5,177.0" fill="#d8d8d8"/>

<polygon points="1434,85 1452,85 1460,93 1460,122 1434,122" fill="#8fd0fb"/><polygon points="1452,85 1460,93 1452,93" fill="#c5e6fd"/>
<rect x="1414.5" y="101.5" width="29" height="21" fill="#666c78" stroke="#d8d8d8" stroke-width="1.1"/>
<circle cx="1443.5" cy="122.5" r="10" fill="#666c78" stroke="#d8d8d8" stroke-width="1.1"/><path d="M1434,122.5 L1443.5,122.5 L1443.5,112.5" fill="none" stroke="#d8d8d8" stroke-width="1.1"/>
<rect x="1412" y="121" width="4" height="4" fill="#d8d8d8"/>
<rect x="1472" y="98.5" width="15" height="11" fill="#666c78" stroke="#d8d8d8" stroke-width="1"/><circle cx="1486.5" cy="109.5" r="4.5" fill="#666c78" stroke="#d8d8d8" stroke-width="1"/><rect x="1471" y="108" width="3" height="3" fill="#d8d8d8"/>
<polygon points="1488.5,89 1490,93 1494.5,92 1491.5,95.5 1494.5,99 1490,98 1488.5,102 1487,98 1482.5,99 1485.5,95.5 1482.5,92 1487,93" fill="#f5c96a"/>
<rect x="1472" y="133.5" width="15" height="11" fill="#666c78" stroke="#d8d8d8" stroke-width="1"/><circle cx="1489" cy="144.5" r="4.5" fill="#666c78" stroke="#d8d8d8" stroke-width="1"/><rect x="1471" y="143" width="3" height="3" fill="#d8d8d8"/>
<polygon points="1483,136 1492,127 1495,130 1486,139" fill="#f5c96a"/><circle cx="1493.5" cy="128.5" r="2.2" fill="#e85a5a"/><polygon points="1483,136 1486,139 1482,140" fill="#bbb"/>
<polygon points="1471,163 1479,163 1493,177 1483,187 1471,175" fill="#d8d8d8"/><circle cx="1475.5" cy="167.5" r="1.3" fill="#444"/><line x1="1476" y1="173" x2="1485" y2="180" stroke="#666" stroke-width="0.9"/>
<polygon points="1483,171 1492,162 1495,165 1486,174" fill="#f5c96a"/><circle cx="1493.5" cy="163.5" r="2.2" fill="#e85a5a"/><polygon points="1483,171 1486,174 1482,175" fill="#bbb"/>

<text x="1785.00" y="218" font-family="Liberation Sans" font-size="18" fill="#efefef" font-weight="normal" font-style="normal" textLength="78.26" lengthAdjust="spacingAndGlyphs" >Properties</text>
<g transform="translate(1872.8,207)"><polygon points="0,0 12.5,0 6.25,6.5" fill="#d8d8d8"/></g>
<text x="1670.50" y="162" font-family="Liberation Sans" font-size="18" fill="#efefef" font-weight="normal" font-style="normal" textLength="47.87" lengthAdjust="spacingAndGlyphs" >Match</text>
<text x="1654.90" y="186" font-family="Liberation Sans" font-size="18" fill="#efefef" font-weight="normal" font-style="normal" textLength="78.36" lengthAdjust="spacingAndGlyphs" >Properties</text>

<rect x="1672" y="89" width="30" height="42" fill="#dcdcdc"/><rect x="1675" y="92" width="24" height="15" fill="#8fd0fb" stroke="#555" stroke-width="0.8"/>
<line x1="1677" y1="115" x2="1695" y2="115" stroke="#555" stroke-width="1"/><line x1="1677" y1="123" x2="1692" y2="123" stroke="#555" stroke-width="1"/><rect x="1680" y="113" width="1.3" height="4" fill="#555"/><rect x="1690" y="121" width="1.3" height="4" fill="#555"/>
<polygon points="1695,124 1703,116 1710,123 1702,131" fill="#f5c96a"/><polygon points="1703,116 1711,108 1718,115 1710,123" fill="#eee"/><rect x="1712" y="107" width="4" height="4" fill="#eee"/>

<path d="M1754,101 L1754.00,89.00 A12,12 0 0 1 1764.39,95.00 Z" fill="#f9b93a"/><path d="M1754,101 L1764.39,95.00 A12,12 0 0 1 1764.39,107.00 Z" fill="#f58a3a"/><path d="M1754,101 L1764.39,107.00 A12,12 0 0 1 1754.00,113.00 Z" fill="#e85a5a"/><path d="M1754,101 L1754.00,113.00 A12,12 0 0 1 1743.61,107.00 Z" fill="#8a5cf0"/><path d="M1754,101 L1743.61,107.00 A12,12 0 0 1 1743.61,95.00 Z" fill="#1eaad0"/><path d="M1754,101 L1743.61,95.00 A12,12 0 0 1 1754.00,89.00 Z" fill="#4ec27a"/>

<rect x="1742" y="124.5" width="24" height="1.6" fill="#dcdcdc"/><rect x="1742" y="129.5" width="24" height="3" fill="#dcdcdc"/><rect x="1742" y="135.5" width="24" height="4.5" fill="#dcdcdc"/><rect x="1742" y="143" width="24" height="5.8" fill="#dcdcdc"/>
<g stroke="#dcdcdc" stroke-width="1.2"><line x1="1742" y1="164.5" x2="1766" y2="164.5" stroke-dasharray="2,2"/><line x1="1742" y1="168.5" x2="1766" y2="168.5" stroke-dasharray="5,2"/><line x1="1742" y1="172" x2="1766" y2="172"/><line x1="1742" y1="176" x2="1766" y2="176" stroke-dasharray="4,1.5,1.5,1.5"/><line x1="1742" y1="180.5" x2="1766" y2="180.5" stroke-dasharray="6,2"/></g>

<rect x="1769.3" y="84.6" width="269.5" height="32.5" fill="#2b313c" />
<rect x="1770.8" y="86.19999999999999" width="266.5" height="29.3" fill="#4b5567" />
<rect x="1769.3" y="121.7" width="269.5" height="31.39999999999999" fill="#2b313c" />
<rect x="1770.8" y="123.3" width="266.5" height="28.199999999999992" fill="#4b5567" />
<rect x="1769.3" y="157.6" width="269.5" height="31.700000000000017" fill="#2b313c" />
<rect x="1770.8" y="159.2" width="266.5" height="28.500000000000018" fill="#4b5567" />
<rect x="1779.5" y="89.5" width="23" height="23" fill="#ff0000" stroke="#cfcfcf" stroke-width="1"/>
<text x="1810.00" y="108" font-family="Liberation Sans" font-size="18" fill="#efefef" font-weight="normal" font-style="normal" textLength="58.68" lengthAdjust="spacingAndGlyphs" >ByLayer</text>
<rect x="1779" y="135.8" width="96" height="2.6" fill="#f2f2f2" />
<text x="1878.60" y="144" font-family="Liberation Sans" font-size="18" fill="#efefef" font-weight="normal" font-style="normal" textLength="59.38" lengthAdjust="spacingAndGlyphs" >ByLayer</text>
<rect x="1779" y="171.7" width="96" height="2.6" fill="#f2f2f2" />
<text x="1878.60" y="180" font-family="Liberation Sans" font-size="18" fill="#efefef" font-weight="normal" font-style="normal" textLength="59.38" lengthAdjust="spacingAndGlyphs" >ByLayer</text>
<polygon points="2024.75,98.5 2036.25,98.5 2030.5,104.5" fill="#dcdcdc"/>
<polygon points="2024.75,135 2036.25,135 2030.5,141" fill="#dcdcdc"/>
<polygon points="2024.75,171 2036.25,171 2030.5,177" fill="#dcdcdc"/>
<g transform="translate(2027,206)"><line x1="1" y1="1" x2="8" y2="7.5" stroke="#d8d8d8" stroke-width="1.5"/><polyline points="8,2 8,7.5 2.5,7.5" fill="none" stroke="#d8d8d8" stroke-width="1.5"/></g>
<text x="2057.30" y="218" font-family="Liberation Sans" font-size="18" fill="#efefef" font-weight="normal" font-style="normal" textLength="57.59" lengthAdjust="spacingAndGlyphs" >Groups</text>
<g transform="translate(2124.3,207)"><polygon points="0,0 12.5,0 6.25,6.5" fill="#d8d8d8"/></g>
<text x="2052.60" y="161" font-family="Liberation Sans" font-size="18" fill="#efefef" font-weight="normal" font-style="normal" textLength="48.69" lengthAdjust="spacingAndGlyphs" >Group</text>

<path d="M2059,96 L2054.5,96 L2054.5,135.5 L2059,135.5 M2096.5,114 L2096.5,135.5 L2092,135.5" fill="none" stroke="#eee" stroke-width="1.3"/>
<rect x="2063.5" y="101" width="15" height="11.5" fill="#4a6a90" stroke="#7cc5f5" stroke-width="1.2"/>
<circle cx="2070.5" cy="124.5" r="7.2" fill="#6b707b" stroke="#ddd" stroke-width="1.1"/>
<polygon points="2088,88.5 2090,95 2096,92 2093.5,98 2100.5,100.5 2093.5,103 2096,109 2090,106 2088,113 2086,106 2080,109 2082.5,103 2075.5,100.5 2082.5,98 2080,92 2086,95" fill="#f5c96a"/>
<path d="M2128,89 L2131.5,89 L2131.5,97 M2131.5,104 L2131.5,113 L2128,113" fill="none" stroke="#eee" stroke-width="1.1"/>
<rect x="2116" y="92" width="8.5" height="7.5" fill="#4a6a90" stroke="#7cc5f5" stroke-width="1.1"/><circle cx="2120.5" cy="105.5" r="4.2" fill="#6b707b" stroke="#ddd" stroke-width="1"/>
<g stroke="#f05a5a" stroke-width="2"><line x1="2129" y1="98.5" x2="2135" y2="104.5"/><line x1="2135" y1="98.5" x2="2129" y2="104.5"/></g>
<path d="M2116.5,125.5 L2113.5,125.5 L2113.5,145.5 L2116.5,145.5 M2127,125.5 L2128.5,125.5 L2128.5,140" fill="none" stroke="#eee" stroke-width="1.1"/>
<rect x="2117" y="128.5" width="7" height="6" fill="#4a6a90" stroke="#7cc5f5" stroke-width="1"/><circle cx="2120.5" cy="139.5" r="3.3" fill="#6b707b" stroke="#ddd" stroke-width="1"/>
<polygon points="2126,146 2134,137 2137,140 2129,149" fill="#f5c96a"/><circle cx="2135.5" cy="138" r="2" fill="#e85a5a"/><polygon points="2126,146 2129,149 2125,150" fill="#bbb"/>
<rect x="2106.8" y="156" width="34.6" height="31.4" fill="#43546b" stroke="#6cbdf3" stroke-width="1.3"/>
<path d="M2117.5,161.5 L2115,161.5 L2115,181.5 L2117.5,181.5 M2127,161.5 L2129.5,161.5 L2129.5,171" fill="none" stroke="#eee" stroke-width="1.1"/>
<rect x="2119" y="164.5" width="7" height="5.5" fill="none" stroke="#5fd07a" stroke-width="1.1"/><circle cx="2122.5" cy="175.5" r="3.6" fill="none" stroke="#5fd07a" stroke-width="1.1"/>
<polygon points="2128,172 2136,180 2132.5,180 2134.5,185 2132.5,186 2130.5,181 2128,183.5" fill="#f2f2f2"/>

<text x="2182.40" y="218" font-family="Liberation Sans" font-size="18" fill="#efefef" font-weight="normal" font-style="normal" textLength="55.96" lengthAdjust="spacingAndGlyphs" >Utilities</text>
<g transform="translate(2247.9,207)"><polygon points="0,0 12.5,0 6.25,6.5" fill="#d8d8d8"/></g>
<text x="2167.70" y="161" font-family="Liberation Sans" font-size="18" fill="#efefef" font-weight="normal" font-style="normal" textLength="66.21" lengthAdjust="spacingAndGlyphs" >Measure</text>
<polygon points="2196.7,170.8 2204.7,170.8 2200.7,175.3" fill="#d8d8d8"/>
<rect x="2179.8" y="107" width="42.4" height="10" fill="#f5c96a"/><rect x="2183.0" y="107" width="1" height="2.2" fill="#7a6a40"/><rect x="2187.6" y="107" width="1" height="3.5" fill="#7a6a40"/><rect x="2192.2" y="107" width="1" height="2.2" fill="#7a6a40"/><rect x="2196.8" y="107" width="1" height="3.5" fill="#7a6a40"/><rect x="2201.4" y="107" width="1" height="2.2" fill="#7a6a40"/><rect x="2206.0" y="107" width="1" height="3.5" fill="#7a6a40"/><rect x="2210.6" y="107" width="1" height="2.2" fill="#7a6a40"/><rect x="2215.2" y="107" width="1" height="3.5" fill="#7a6a40"/><rect x="2219.8" y="107" width="1" height="2.2" fill="#7a6a40"/>

<polygon points="2259,96 2259,111 2262.5,107.5 2265,113 2267,112 2264.5,106.5 2269,106.5" fill="#f2f2f2"/>
<polygon points="2265,93 2270,89 2269,92.5 2273,93 2267,98 2268,94.5" fill="#f5c96a"/>
<rect x="2269" y="99" width="14" height="14" fill="#eee"/><g fill="#1e88e5"><rect x="2271.5" y="102" width="1.5" height="1.5"/><rect x="2271.5" y="105.5" width="1.5" height="1.5"/><rect x="2271.5" y="109" width="1.5" height="1.5"/><rect x="2274.5" y="102" width="6" height="1.3"/><rect x="2274.5" y="105.5" width="6" height="1.3"/><rect x="2274.5" y="109" width="6" height="1.3"/></g>
<rect x="2259" y="125.5" width="22" height="21" fill="none" stroke="#5fd07a" stroke-width="1.1" stroke-dasharray="2.2,1.5"/>
<rect x="2265" y="128" width="14" height="12" fill="#6ccf8a"/><rect x="2262" y="132" width="12" height="11.5" fill="#6ccf8a" stroke="#3b4453" stroke-width="0.8"/>
<polygon points="2274,136 2283,145 2279,145 2281.5,150 2279.5,151 2277,146 2274,149" fill="#f2f2f2"/>
<rect x="2262" y="161" width="17" height="24" fill="#d8d8d8"/><rect x="2264.5" y="164" width="12" height="4" fill="#555"/>
<g fill="#555"><rect x="2264.5" y="171" width="2.5" height="2.2"/><rect x="2269" y="171" width="2.5" height="2.2"/><rect x="2273.5" y="171" width="2.5" height="2.2"/><rect x="2264.5" y="175" width="2.5" height="2.2"/><rect x="2269" y="175" width="2.5" height="2.2"/><rect x="2273.5" y="175" width="2.5" height="2.2"/><rect x="2264.5" y="179" width="2.5" height="2.2"/><rect x="2269" y="179" width="2.5" height="2.2"/><rect x="2273.5" y="179" width="2.5" height="2.2"/></g>

<text x="2322.70" y="218" font-family="Liberation Sans" font-size="18" fill="#efefef" font-weight="normal" font-style="normal" textLength="76.61" lengthAdjust="spacingAndGlyphs" >Clipboard</text>
<text x="2313.80" y="161" font-family="Liberation Sans" font-size="18" fill="#efefef" font-weight="normal" font-style="normal" textLength="40.23" lengthAdjust="spacingAndGlyphs" >Paste</text>
<polygon points="2328.8,171 2336.8,171 2332.8,175.5" fill="#d8d8d8"/>

<polygon points="2315,93 2348,93 2348,101 2325,101 2325,130 2315,130" fill="#dfb37a"/>
<rect x="2323" y="90" width="17" height="4.5" rx="2" fill="#eee"/><rect x="2328" y="88" width="7" height="3" fill="#eee"/>
<polygon points="2326,103 2344,103 2353,112 2353,136 2326,136" fill="#dcdcdc"/><polygon points="2344,103 2353,112 2344,112" fill="#f2f2f2"/>
<rect x="2379" y="89" width="18" height="21" fill="#d8d8d8"/><g stroke="#999" stroke-width="0.9"><line x1="2382" y1="93.5" x2="2393" y2="93.5"/><line x1="2382" y1="99.5" x2="2391" y2="99.5"/><line x1="2382" y1="105" x2="2390" y2="105"/></g>
<g stroke="#f2f2f2" stroke-width="1.3" fill="none"><line x1="2389" y1="96.5" x2="2398" y2="108"/><line x1="2403" y1="98.5" x2="2395" y2="108"/><circle cx="2393" cy="110.5" r="2.2"/><circle cx="2399.5" cy="110.5" r="2.2"/></g>
<polygon points="2382,125 2391,125 2391,144 2382,144" fill="#d8d8d8" stroke="#3b4453" stroke-width="0.8"/>
<polygon points="2386,129 2396,129 2401,134 2401,149 2386,149" fill="#dcdcdc" stroke="#3b4453" stroke-width="0.8"/><polygon points="2396,129 2401,134 2396,134" fill="#f2f2f2"/>

<polygon points="2409.7,98 2417.7,98 2413.7,102.5" fill="#d8d8d8"/>
<polygon points="2409.7,133.5 2417.7,133.5 2413.7,138.0" fill="#d8d8d8"/>
<text x="2438.40" y="218" font-family="Liberation Sans" font-size="18" fill="#efefef" font-weight="normal" font-style="normal" textLength="36.39" lengthAdjust="spacingAndGlyphs" >View</text>
<g transform="translate(2484.1,207)"><polygon points="0,0 11.6,0 5.8,6.5" fill="#d8d8d8"/></g>
<g transform="translate(2509,206)"><line x1="1" y1="1" x2="8" y2="7.5" stroke="#d8d8d8" stroke-width="1.5"/><polyline points="8,2 8,7.5 2.5,7.5" fill="none" stroke="#d8d8d8" stroke-width="1.5"/></g>
<text x="2459.80" y="161" font-family="Liberation Sans" font-size="18" fill="#efefef" font-weight="normal" font-style="normal" textLength="34.99" lengthAdjust="spacingAndGlyphs" >Base</text>
<polygon points="2472.7,170 2480.7,170 2476.7,174.5" fill="#d8d8d8"/>
<polygon points="2453,93 2474,93 2474,108 2501,108 2501,129 2453,129" fill="#dcdcdc"/>
<polygon points="89,264.5 104.4,229 246,229 232,264.5" fill="#3b4453"/>
<line x1="18.5" y1="259" x2="28.5" y2="234" stroke="#4f5866" stroke-width="1.2"/>
<text x="42.50" y="254" font-family="Liberation Sans" font-size="18" fill="#f0f0f0" font-weight="normal" font-style="normal" textLength="35.33" lengthAdjust="spacingAndGlyphs" >Start</text>
<text x="114.70" y="254" font-family="Liberation Sans" font-size="18" fill="#f5f5f5" font-weight="bold" font-style="normal" textLength="87.60" lengthAdjust="spacingAndGlyphs" >Drawing1*</text>
<g stroke="#b8bcc4" stroke-width="2.4"><line x1="217.5" y1="242.5" x2="228" y2="253"/><line x1="228" y1="242.5" x2="217.5" y2="253"/></g>
<g stroke="#e0e0e0" stroke-width="2.6"><line x1="259" y1="247.2" x2="277" y2="247.2"/><line x1="268" y1="238" x2="268" y2="256.3"/></g>
<line x1="293.8" y1="258.7" x2="304" y2="235.5" stroke="#4f5866" stroke-width="1.2"/>
<text x="46.40" y="295" font-family="Liberation Sans" font-size="18" fill="#e8e8e8" font-weight="normal" font-style="normal" textLength="225.61" lengthAdjust="spacingAndGlyphs" >[−][SE Isometric][Wireframe]</text>
<rect x="2464.6" y="290.5" width="15.5" height="7" fill="#e6e6e6" stroke="#1a1d22" stroke-width="1"/>
<rect x="2497" y="281.5" width="12" height="12" fill="none" stroke="#e6e6e6" stroke-width="2.2"/><rect x="2494.5" y="285.5" width="11.5" height="11.5" fill="#222832" stroke="#e6e6e6" stroke-width="2.6"/>
<g stroke="#e6e6e6" stroke-width="3"><line x1="2526" y1="284" x2="2538" y2="296"/><line x1="2538" y1="284" x2="2526" y2="296"/></g>
<g fill="none" stroke="#ffffff" stroke-width="1" shape-rendering="crispEdges">
<polygon points="1330.90,455.50 1330.88,457.01 1330.82,458.52 1330.72,460.03 1330.57,461.53 1330.39,463.04 1330.16,464.54 1329.90,466.05 1329.59,467.54 1329.24,469.04 1328.85,470.53 1328.42,472.02 1327.95,473.51 1327.44,474.99 1326.89,476.46 1326.31,477.93 1325.68,479.40 1325.01,480.86 1324.30,482.31 1323.55,483.76 1322.76,485.20 1321.93,486.63 1321.07,488.05 1320.16,489.47 1319.22,490.88 1318.24,492.28 1317.22,493.67 1316.17,495.05 1315.07,496.42 1313.94,497.78 1312.77,499.13 1311.57,500.47 1310.33,501.80 1309.05,503.11 1307.74,504.42 1306.39,505.71 1305.01,506.99 1303.59,508.26 1302.14,509.52 1300.66,510.76 1299.14,511.99 1297.59,513.20 1296.00,514.40 1294.39,515.59 1292.74,516.76 1291.06,517.91 1289.34,519.05 1287.60,520.18 1285.83,521.28 1284.02,522.38 1282.19,523.45 1280.33,524.51 1278.44,525.55 1276.52,526.58 1274.58,527.59 1272.60,528.58 1270.60,529.55 1268.58,530.50 1266.53,531.43 1264.45,532.35 1262.35,533.25 1260.22,534.12 1258.07,534.98 1255.90,535.82 1253.71,536.64 1251.49,537.44 1249.25,538.22 1246.99,538.98 1244.72,539.71 1242.42,540.43 1240.10,541.13 1237.76,541.80 1235.41,542.45 1233.03,543.09 1230.65,543.70 1228.24,544.28 1225.82,544.85 1223.38,545.40 1220.93,545.92 1218.47,546.42 1215.99,546.90 1213.50,547.35 1211.00,547.78 1208.48,548.19 1205.96,548.58 1203.42,548.94 1200.88,549.29 1198.32,549.60 1195.76,549.90 1193.19,550.17 1190.62,550.42 1188.03,550.64 1185.44,550.84 1182.85,551.02 1180.25,551.17 1177.65,551.30 1175.04,551.41 1172.43,551.49 1169.82,551.55 1167.21,551.59 1164.60,551.60 1161.99,551.59 1159.38,551.55 1156.77,551.49 1154.16,551.41 1151.55,551.30 1148.95,551.17 1146.35,551.02 1143.76,550.84 1141.17,550.64 1138.58,550.42 1136.01,550.17 1133.44,549.90 1130.88,549.60 1128.32,549.29 1125.78,548.94 1123.24,548.58 1120.72,548.19 1118.20,547.78 1115.70,547.35 1113.21,546.90 1110.73,546.42 1108.27,545.92 1105.82,545.40 1103.38,544.85 1100.96,544.28 1098.55,543.70 1096.17,543.09 1093.79,542.45 1091.44,541.80 1089.10,541.13 1086.78,540.43 1084.48,539.71 1082.21,538.98 1079.95,538.22 1077.71,537.44 1075.49,536.64 1073.30,535.82 1071.13,534.98 1068.98,534.12 1066.85,533.25 1064.75,532.35 1062.67,531.43 1060.62,530.50 1058.60,529.55 1056.60,528.58 1054.62,527.59 1052.68,526.58 1050.76,525.55 1048.87,524.51 1047.01,523.45 1045.18,522.38 1043.37,521.28 1041.60,520.18 1039.86,519.05 1038.14,517.91 1036.46,516.76 1034.81,515.59 1033.20,514.40 1031.61,513.20 1030.06,511.99 1028.54,510.76 1027.06,509.52 1025.61,508.26 1024.19,506.99 1022.81,505.71 1021.46,504.42 1020.15,503.11 1018.87,501.80 1017.63,500.47 1016.43,499.13 1015.26,497.78 1014.13,496.42 1013.03,495.05 1011.98,493.67 1010.96,492.28 1009.98,490.88 1009.04,489.47 1008.13,488.05 1007.27,486.63 1006.44,485.20 1005.65,483.76 1004.90,482.31 1004.19,480.86 1003.52,479.40 1002.89,477.93 1002.31,476.46 1001.76,474.99 1001.25,473.51 1000.78,472.02 1000.35,470.53 999.96,469.04 999.61,467.54 999.30,466.05 999.04,464.54 998.81,463.04 998.63,461.53 998.48,460.03 998.38,458.52 998.32,457.01 998.30,455.50 998.32,453.99 998.38,452.48 998.48,450.97 998.63,449.47 998.81,447.96 999.04,446.46 999.30,444.95 999.61,443.46 999.96,441.96 1000.35,440.47 1000.78,438.98 1001.25,437.49 1001.76,436.01 1002.31,434.54 1002.89,433.07 1003.52,431.60 1004.19,430.14 1004.90,428.69 1005.65,427.24 1006.44,425.80 1007.27,424.37 1008.13,422.95 1009.04,421.53 1009.98,420.12 1010.96,418.72 1011.98,417.33 1013.03,415.95 1014.13,414.58 1015.26,413.22 1016.43,411.87 1017.63,410.53 1018.87,409.20 1020.15,407.89 1021.46,406.58 1022.81,405.29 1024.19,404.01 1025.61,402.74 1027.06,401.48 1028.54,400.24 1030.06,399.01 1031.61,397.80 1033.20,396.60 1034.81,395.41 1036.46,394.24 1038.14,393.09 1039.86,391.95 1041.60,390.82 1043.37,389.72 1045.18,388.62 1047.01,387.55 1048.87,386.49 1050.76,385.45 1052.68,384.42 1054.62,383.41 1056.60,382.42 1058.60,381.45 1060.62,380.50 1062.67,379.57 1064.75,378.65 1066.85,377.75 1068.98,376.88 1071.13,376.02 1073.30,375.18 1075.49,374.36 1077.71,373.56 1079.95,372.78 1082.21,372.02 1084.48,371.29 1086.78,370.57 1089.10,369.87 1091.44,369.20 1093.79,368.55 1096.17,367.91 1098.55,367.30 1100.96,366.72 1103.38,366.15 1105.82,365.60 1108.27,365.08 1110.73,364.58 1113.21,364.10 1115.70,363.65 1118.20,363.22 1120.72,362.81 1123.24,362.42 1125.78,362.06 1128.32,361.71 1130.88,361.40 1133.44,361.10 1136.01,360.83 1138.58,360.58 1141.17,360.36 1143.76,360.16 1146.35,359.98 1148.95,359.83 1151.55,359.70 1154.16,359.59 1156.77,359.51 1159.38,359.45 1161.99,359.41 1164.60,359.40 1167.21,359.41 1169.82,359.45 1172.43,359.51 1175.04,359.59 1177.65,359.70 1180.25,359.83 1182.85,359.98 1185.44,360.16 1188.03,360.36 1190.62,360.58 1193.19,360.83 1195.76,361.10 1198.32,361.40 1200.88,361.71 1203.42,362.06 1205.96,362.42 1208.48,362.81 1211.00,363.22 1213.50,363.65 1215.99,364.10 1218.47,364.58 1220.93,365.08 1223.38,365.60 1225.82,366.15 1228.24,366.72 1230.65,367.30 1233.03,367.91 1235.41,368.55 1237.76,369.20 1240.10,369.87 1242.42,370.57 1244.72,371.29 1246.99,372.02 1249.25,372.78 1251.49,373.56 1253.71,374.36 1255.90,375.18 1258.07,376.02 1260.22,376.88 1262.35,377.75 1264.45,378.65 1266.53,379.57 1268.58,380.50 1270.60,381.45 1272.60,382.42 1274.58,383.41 1276.52,384.42 1278.44,385.45 1280.33,386.49 1282.19,387.55 1284.02,388.62 1285.83,389.72 1287.60,390.82 1289.34,391.95 1291.06,393.09 1292.74,394.24 1294.39,395.41 1296.00,396.60 1297.59,397.80 1299.14,399.01 1300.66,400.24 1302.14,401.48 1303.59,402.74 1305.01,404.01 1306.39,405.29 1307.74,406.58 1309.05,407.89 1310.33,409.20 1311.57,410.53 1312.77,411.87 1313.94,413.22 1315.07,414.58 1316.17,415.95 1317.22,417.33 1318.24,418.72 1319.22,420.12 1320.16,421.53 1321.07,422.95 1321.93,424.37 1322.76,425.80 1323.55,427.24 1324.30,428.69 1325.01,430.14 1325.68,431.60 1326.31,433.07 1326.89,434.54 1327.44,436.01 1327.95,437.49 1328.42,438.98 1328.85,440.47 1329.24,441.96 1329.59,443.46 1329.90,444.95 1330.16,446.46 1330.39,447.96 1330.57,449.47 1330.72,450.97 1330.82,452.48 1330.88,453.99"/>
<polygon points="1330.90,998.30 1330.88,999.81 1330.82,1001.32 1330.72,1002.83 1330.57,1004.33 1330.39,1005.84 1330.16,1007.34 1329.90,1008.85 1329.59,1010.34 1329.24,1011.84 1328.85,1013.33 1328.42,1014.82 1327.95,1016.31 1327.44,1017.79 1326.89,1019.26 1326.31,1020.73 1325.68,1022.20 1325.01,1023.66 1324.30,1025.11 1323.55,1026.56 1322.76,1028.00 1321.93,1029.43 1321.07,1030.85 1320.16,1032.27 1319.22,1033.68 1318.24,1035.08 1317.22,1036.47 1316.17,1037.85 1315.07,1039.22 1313.94,1040.58 1312.77,1041.93 1311.57,1043.27 1310.33,1044.60 1309.05,1045.91 1307.74,1047.22 1306.39,1048.51 1305.01,1049.79 1303.59,1051.06 1302.14,1052.32 1300.66,1053.56 1299.14,1054.79 1297.59,1056.00 1296.00,1057.20 1294.39,1058.39 1292.74,1059.56 1291.06,1060.71 1289.34,1061.85 1287.60,1062.98 1285.83,1064.08 1284.02,1065.18 1282.19,1066.25 1280.33,1067.31 1278.44,1068.35 1276.52,1069.38 1274.58,1070.39 1272.60,1071.38 1270.60,1072.35 1268.58,1073.30 1266.53,1074.23 1264.45,1075.15 1262.35,1076.05 1260.22,1076.92 1258.07,1077.78 1255.90,1078.62 1253.71,1079.44 1251.49,1080.24 1249.25,1081.02 1246.99,1081.78 1244.72,1082.51 1242.42,1083.23 1240.10,1083.93 1237.76,1084.60 1235.41,1085.25 1233.03,1085.89 1230.65,1086.50 1228.24,1087.08 1225.82,1087.65 1223.38,1088.20 1220.93,1088.72 1218.47,1089.22 1215.99,1089.70 1213.50,1090.15 1211.00,1090.58 1208.48,1090.99 1205.96,1091.38 1203.42,1091.74 1200.88,1092.09 1198.32,1092.40 1195.76,1092.70 1193.19,1092.97 1190.62,1093.22 1188.03,1093.44 1185.44,1093.64 1182.85,1093.82 1180.25,1093.97 1177.65,1094.10 1175.04,1094.21 1172.43,1094.29 1169.82,1094.35 1167.21,1094.39 1164.60,1094.40 1161.99,1094.39 1159.38,1094.35 1156.77,1094.29 1154.16,1094.21 1151.55,1094.10 1148.95,1093.97 1146.35,1093.82 1143.76,1093.64 1141.17,1093.44 1138.58,1093.22 1136.01,1092.97 1133.44,1092.70 1130.88,1092.40 1128.32,1092.09 1125.78,1091.74 1123.24,1091.38 1120.72,1090.99 1118.20,1090.58 1115.70,1090.15 1113.21,1089.70 1110.73,1089.22 1108.27,1088.72 1105.82,1088.20 1103.38,1087.65 1100.96,1087.08 1098.55,1086.50 1096.17,1085.89 1093.79,1085.25 1091.44,1084.60 1089.10,1083.93 1086.78,1083.23 1084.48,1082.51 1082.21,1081.78 1079.95,1081.02 1077.71,1080.24 1075.49,1079.44 1073.30,1078.62 1071.13,1077.78 1068.98,1076.92 1066.85,1076.05 1064.75,1075.15 1062.67,1074.23 1060.62,1073.30 1058.60,1072.35 1056.60,1071.38 1054.62,1070.39 1052.68,1069.38 1050.76,1068.35 1048.87,1067.31 1047.01,1066.25 1045.18,1065.18 1043.37,1064.08 1041.60,1062.98 1039.86,1061.85 1038.14,1060.71 1036.46,1059.56 1034.81,1058.39 1033.20,1057.20 1031.61,1056.00 1030.06,1054.79 1028.54,1053.56 1027.06,1052.32 1025.61,1051.06 1024.19,1049.79 1022.81,1048.51 1021.46,1047.22 1020.15,1045.91 1018.87,1044.60 1017.63,1043.27 1016.43,1041.93 1015.26,1040.58 1014.13,1039.22 1013.03,1037.85 1011.98,1036.47 1010.96,1035.08 1009.98,1033.68 1009.04,1032.27 1008.13,1030.85 1007.27,1029.43 1006.44,1028.00 1005.65,1026.56 1004.90,1025.11 1004.19,1023.66 1003.52,1022.20 1002.89,1020.73 1002.31,1019.26 1001.76,1017.79 1001.25,1016.31 1000.78,1014.82 1000.35,1013.33 999.96,1011.84 999.61,1010.34 999.30,1008.85 999.04,1007.34 998.81,1005.84 998.63,1004.33 998.48,1002.83 998.38,1001.32 998.32,999.81 998.30,998.30 998.32,996.79 998.38,995.28 998.48,993.77 998.63,992.27 998.81,990.76 999.04,989.26 999.30,987.75 999.61,986.26 999.96,984.76 1000.35,983.27 1000.78,981.78 1001.25,980.29 1001.76,978.81 1002.31,977.34 1002.89,975.87 1003.52,974.40 1004.19,972.94 1004.90,971.49 1005.65,970.04 1006.44,968.60 1007.27,967.17 1008.13,965.75 1009.04,964.33 1009.98,962.92 1010.96,961.52 1011.98,960.13 1013.03,958.75 1014.13,957.38 1015.26,956.02 1016.43,954.67 1017.63,953.33 1018.87,952.00 1020.15,950.69 1021.46,949.38 1022.81,948.09 1024.19,946.81 1025.61,945.54 1027.06,944.28 1028.54,943.04 1030.06,941.81 1031.61,940.60 1033.20,939.40 1034.81,938.21 1036.46,937.04 1038.14,935.89 1039.86,934.75 1041.60,933.62 1043.37,932.52 1045.18,931.42 1047.01,930.35 1048.87,929.29 1050.76,928.25 1052.68,927.22 1054.62,926.21 1056.60,925.22 1058.60,924.25 1060.62,923.30 1062.67,922.37 1064.75,921.45 1066.85,920.55 1068.98,919.68 1071.13,918.82 1073.30,917.98 1075.49,917.16 1077.71,916.36 1079.95,915.58 1082.21,914.82 1084.48,914.09 1086.78,913.37 1089.10,912.67 1091.44,912.00 1093.79,911.35 1096.17,910.71 1098.55,910.10 1100.96,909.52 1103.38,908.95 1105.82,908.40 1108.27,907.88 1110.73,907.38 1113.21,906.90 1115.70,906.45 1118.20,906.02 1120.72,905.61 1123.24,905.22 1125.78,904.86 1128.32,904.51 1130.88,904.20 1133.44,903.90 1136.01,903.63 1138.58,903.38 1141.17,903.16 1143.76,902.96 1146.35,902.78 1148.95,902.63 1151.55,902.50 1154.16,902.39 1156.77,902.31 1159.38,902.25 1161.99,902.21 1164.60,902.20 1167.21,902.21 1169.82,902.25 1172.43,902.31 1175.04,902.39 1177.65,902.50 1180.25,902.63 1182.85,902.78 1185.44,902.96 1188.03,903.16 1190.62,903.38 1193.19,903.63 1195.76,903.90 1198.32,904.20 1200.88,904.51 1203.42,904.86 1205.96,905.22 1208.48,905.61 1211.00,906.02 1213.50,906.45 1215.99,906.90 1218.47,907.38 1220.93,907.88 1223.38,908.40 1225.82,908.95 1228.24,909.52 1230.65,910.10 1233.03,910.71 1235.41,911.35 1237.76,912.00 1240.10,912.67 1242.42,913.37 1244.72,914.09 1246.99,914.82 1249.25,915.58 1251.49,916.36 1253.71,917.16 1255.90,917.98 1258.07,918.82 1260.22,919.68 1262.35,920.55 1264.45,921.45 1266.53,922.37 1268.58,923.30 1270.60,924.25 1272.60,925.22 1274.58,926.21 1276.52,927.22 1278.44,928.25 1280.33,929.29 1282.19,930.35 1284.02,931.42 1285.83,932.52 1287.60,933.62 1289.34,934.75 1291.06,935.89 1292.74,937.04 1294.39,938.21 1296.00,939.40 1297.59,940.60 1299.14,941.81 1300.66,943.04 1302.14,944.28 1303.59,945.54 1305.01,946.81 1306.39,948.09 1307.74,949.38 1309.05,950.69 1310.33,952.00 1311.57,953.33 1312.77,954.67 1313.94,956.02 1315.07,957.38 1316.17,958.75 1317.22,960.13 1318.24,961.52 1319.22,962.92 1320.16,964.33 1321.07,965.75 1321.93,967.17 1322.76,968.60 1323.55,970.04 1324.30,971.49 1325.01,972.94 1325.68,974.40 1326.31,975.87 1326.89,977.34 1327.44,978.81 1327.95,980.29 1328.42,981.78 1328.85,983.27 1329.24,984.76 1329.59,986.26 1329.90,987.75 1330.16,989.26 1330.39,990.76 1330.57,992.27 1330.72,993.77 1330.82,995.28 1330.88,996.79"/>
<line x1="1046.8" y1="387.2" x2="1281.6" y2="1066.6"/>
<line x1="1282.1" y1="387.2" x2="1047" y2="1066.6"/>
<line x1="1047.6" y1="524.1" x2="1281.6" y2="930.5"/>
<line x1="1281.3" y1="524.1" x2="1047" y2="930.5"/>
</g>
<polygon points="1247.90,862.40 1247.89,863.15 1247.86,863.90 1247.81,864.65 1247.74,865.40 1247.64,866.15 1247.53,866.90 1247.40,867.65 1247.24,868.39 1247.07,869.14 1246.87,869.88 1246.66,870.62 1246.42,871.36 1246.17,872.09 1245.89,872.83 1245.60,873.56 1245.28,874.29 1244.95,875.01 1244.59,875.74 1244.22,876.46 1243.82,877.17 1243.41,877.88 1242.98,878.59 1242.52,879.30 1242.05,880.00 1241.56,880.69 1241.05,881.38 1240.52,882.07 1239.97,882.75 1239.41,883.43 1238.82,884.10 1238.22,884.77 1237.60,885.43 1236.96,886.08 1236.30,886.73 1235.62,887.38 1234.93,888.01 1234.22,888.64 1233.50,889.27 1232.75,889.89 1231.99,890.50 1231.21,891.10 1230.42,891.70 1229.61,892.29 1228.78,892.87 1227.94,893.44 1227.08,894.01 1226.21,894.57 1225.32,895.12 1224.42,895.66 1223.50,896.20 1222.57,896.73 1221.62,897.24 1220.66,897.75 1219.69,898.26 1218.70,898.75 1217.70,899.23 1216.68,899.70 1215.66,900.17 1214.62,900.62 1213.56,901.07 1212.50,901.51 1211.42,901.93 1210.33,902.35 1209.23,902.76 1208.12,903.16 1207.00,903.54 1205.87,903.92 1204.73,904.29 1203.58,904.64 1202.42,904.99 1201.25,905.33 1200.07,905.65 1198.88,905.97 1197.68,906.27 1196.48,906.56 1195.26,906.84 1194.04,907.11 1192.82,907.37 1191.58,907.62 1190.34,907.86 1189.09,908.09 1187.84,908.30 1186.58,908.51 1185.32,908.70 1184.05,908.88 1182.77,909.05 1181.49,909.21 1180.21,909.35 1178.92,909.49 1177.63,909.61 1176.34,909.72 1175.04,909.82 1173.74,909.91 1172.44,909.99 1171.14,910.05 1169.83,910.11 1168.52,910.15 1167.22,910.18 1165.91,910.19 1164.60,910.20 1163.29,910.19 1161.98,910.18 1160.68,910.15 1159.37,910.11 1158.06,910.05 1156.76,909.99 1155.46,909.91 1154.16,909.82 1152.86,909.72 1151.57,909.61 1150.28,909.49 1148.99,909.35 1147.71,909.21 1146.43,909.05 1145.15,908.88 1143.88,908.70 1142.62,908.51 1141.36,908.30 1140.11,908.09 1138.86,907.86 1137.62,907.62 1136.38,907.37 1135.16,907.11 1133.94,906.84 1132.72,906.56 1131.52,906.27 1130.32,905.97 1129.13,905.65 1127.95,905.33 1126.78,904.99 1125.62,904.64 1124.47,904.29 1123.33,903.92 1122.20,903.54 1121.08,903.16 1119.97,902.76 1118.87,902.35 1117.78,901.93 1116.70,901.51 1115.64,901.07 1114.58,900.62 1113.54,900.17 1112.52,899.70 1111.50,899.23 1110.50,898.75 1109.51,898.26 1108.54,897.75 1107.58,897.24 1106.63,896.73 1105.70,896.20 1104.78,895.66 1103.88,895.12 1102.99,894.57 1102.12,894.01 1101.26,893.44 1100.42,892.87 1099.59,892.29 1098.78,891.70 1097.99,891.10 1097.21,890.50 1096.45,889.89 1095.70,889.27 1094.98,888.64 1094.27,888.01 1093.58,887.38 1092.90,886.73 1092.24,886.08 1091.60,885.43 1090.98,884.77 1090.38,884.10 1089.79,883.43 1089.23,882.75 1088.68,882.07 1088.15,881.38 1087.64,880.69 1087.15,880.00 1086.68,879.30 1086.22,878.59 1085.79,877.88 1085.38,877.17 1084.98,876.46 1084.61,875.74 1084.25,875.01 1083.92,874.29 1083.60,873.56 1083.31,872.83 1083.03,872.09 1082.78,871.36 1082.54,870.62 1082.33,869.88 1082.13,869.14 1081.96,868.39 1081.80,867.65 1081.67,866.90 1081.56,866.15 1081.46,865.40 1081.39,864.65 1081.34,863.90 1081.31,863.15 1081.30,862.40 1081.31,861.65 1081.34,860.90 1081.39,860.15 1081.46,859.40 1081.56,858.65 1081.67,857.90 1081.80,857.15 1081.96,856.41 1082.13,855.66 1082.33,854.92 1082.54,854.18 1082.78,853.44 1083.03,852.71 1083.31,851.97 1083.60,851.24 1083.92,850.51 1084.25,849.79 1084.61,849.06 1084.98,848.34 1085.38,847.63 1085.79,846.92 1086.22,846.21 1086.68,845.50 1087.15,844.80 1087.64,844.11 1088.15,843.42 1088.68,842.73 1089.23,842.05 1089.79,841.37 1090.38,840.70 1090.98,840.03 1091.60,839.37 1092.24,838.72 1092.90,838.07 1093.58,837.42 1094.27,836.79 1094.98,836.16 1095.70,835.53 1096.45,834.91 1097.21,834.30 1097.99,833.70 1098.78,833.10 1099.59,832.51 1100.42,831.93 1101.26,831.36 1102.12,830.79 1102.99,830.23 1103.88,829.68 1104.78,829.14 1105.70,828.60 1106.63,828.07 1107.58,827.56 1108.54,827.05 1109.51,826.54 1110.50,826.05 1111.50,825.57 1112.52,825.10 1113.54,824.63 1114.58,824.18 1115.64,823.73 1116.70,823.29 1117.78,822.87 1118.87,822.45 1119.97,822.04 1121.08,821.64 1122.20,821.26 1123.33,820.88 1124.47,820.51 1125.62,820.16 1126.78,819.81 1127.95,819.47 1129.13,819.15 1130.32,818.83 1131.52,818.53 1132.72,818.24 1133.94,817.96 1135.16,817.69 1136.38,817.43 1137.62,817.18 1138.86,816.94 1140.11,816.71 1141.36,816.50 1142.62,816.29 1143.88,816.10 1145.15,815.92 1146.43,815.75 1147.71,815.59 1148.99,815.45 1150.28,815.31 1151.57,815.19 1152.86,815.08 1154.16,814.98 1155.46,814.89 1156.76,814.81 1158.06,814.75 1159.37,814.69 1160.68,814.65 1161.98,814.62 1163.29,814.61 1164.60,814.60 1165.91,814.61 1167.22,814.62 1168.52,814.65 1169.83,814.69 1171.14,814.75 1172.44,814.81 1173.74,814.89 1175.04,814.98 1176.34,815.08 1177.63,815.19 1178.92,815.31 1180.21,815.45 1181.49,815.59 1182.77,815.75 1184.05,815.92 1185.32,816.10 1186.58,816.29 1187.84,816.50 1189.09,816.71 1190.34,816.94 1191.58,817.18 1192.82,817.43 1194.04,817.69 1195.26,817.96 1196.48,818.24 1197.68,818.53 1198.88,818.83 1200.07,819.15 1201.25,819.47 1202.42,819.81 1203.58,820.16 1204.73,820.51 1205.87,820.88 1207.00,821.26 1208.12,821.64 1209.23,822.04 1210.33,822.45 1211.42,822.87 1212.50,823.29 1213.56,823.73 1214.62,824.18 1215.66,824.63 1216.68,825.10 1217.70,825.57 1218.70,826.05 1219.69,826.54 1220.66,827.05 1221.62,827.56 1222.57,828.07 1223.50,828.60 1224.42,829.14 1225.32,829.68 1226.21,830.23 1227.08,830.79 1227.94,831.36 1228.78,831.93 1229.61,832.51 1230.42,833.10 1231.21,833.70 1231.99,834.30 1232.75,834.91 1233.50,835.53 1234.22,836.16 1234.93,836.79 1235.62,837.42 1236.30,838.07 1236.96,838.72 1237.60,839.37 1238.22,840.03 1238.82,840.70 1239.41,841.37 1239.97,842.05 1240.52,842.73 1241.05,843.42 1241.56,844.11 1242.05,844.80 1242.52,845.50 1242.98,846.21 1243.41,846.92 1243.82,847.63 1244.22,848.34 1244.59,849.06 1244.95,849.79 1245.28,850.51 1245.60,851.24 1245.89,851.97 1246.17,852.71 1246.42,853.44 1246.66,854.18 1246.87,854.92 1247.07,855.66 1247.24,856.41 1247.40,857.15 1247.53,857.90 1247.64,858.65 1247.74,859.40 1247.81,860.15 1247.86,860.90 1247.89,861.65" fill="none" stroke="#f01010" stroke-width="1.4" shape-rendering="crispEdges"/>
<defs>
<linearGradient id="gz" x1="0" x2="1" y1="0" y2="0"><stop offset="0" stop-color="#34609e"/><stop offset="0.6" stop-color="#5a86c0"/><stop offset="1" stop-color="#34609e"/></linearGradient>
</defs>
<line x1="1163" y1="999.5" x2="1218" y2="1029" stroke="#b05858" stroke-width="8"/>
<line x1="1163" y1="998.5" x2="1218" y2="1028" stroke="#e89090" stroke-width="3.5"/>
<line x1="1167" y1="996" x2="1218" y2="968" stroke="#357a35" stroke-width="8"/>
<line x1="1167" y1="995.5" x2="1218" y2="967.5" stroke="#5aa85a" stroke-width="3"/>
<rect x="1160" y="939" width="9" height="62" fill="url(#gz)"/>
<ellipse cx="1164.7" cy="940" rx="4.2" ry="1.8" fill="#9cc4f0"/>
<polygon points="1160.5,940 1164.7,936 1169,940" fill="#9cc4f0"/>
<polyline points="1161,915.5 1180,915.5 1161,933.5 1179,933.5" fill="none" stroke="#1a6cf5" stroke-width="1.1"/>
<g stroke="#33c233" stroke-width="1.2" fill="none"><line x1="1212" y1="944" x2="1221" y2="952"/><line x1="1230" y1="944" x2="1221" y2="952"/><line x1="1221" y1="952" x2="1221" y2="962"/></g>
<g stroke="#e84a4a" stroke-width="1.2"><line x1="1212" y1="1005" x2="1230" y2="1023"/><line x1="1230" y1="1005" x2="1212" y2="1023"/></g>

<g shape-rendering="crispEdges" stroke-width="1"><line x1="1494.6" y1="757.2" x2="1494.6" y2="874" stroke="#8a8aff"/>
<line x1="1462.2" y1="816.3" x2="1561.8" y2="873.7" stroke="#f08080"/>
<line x1="1462.2" y1="853.8" x2="1561.8" y2="796.3" stroke="#70f070"/></g>
<rect x="1490.5" y="830" width="8.3" height="8.3" fill="#212830" stroke="#ffffff" stroke-width="1.3"/>
<defs>
<radialGradient id="shad" cx="0.5" cy="0.5" r="0.5"><stop offset="0.5" stop-color="#000" stop-opacity="0.35"/><stop offset="1" stop-color="#000" stop-opacity="0"/></radialGradient>
<linearGradient id="cl" x1="0" y1="0" x2="0" y2="1"><stop offset="0" stop-color="#b9bcc1"/><stop offset="1" stop-color="#9a9da3"/></linearGradient>
<linearGradient id="cr" x1="0" y1="0" x2="0" y2="1"><stop offset="0" stop-color="#c2c5ca"/><stop offset="1" stop-color="#a2a5ab"/></linearGradient>
</defs>
<ellipse cx="2428.6" cy="466" rx="85" ry="53" fill="none" stroke="#444b56" stroke-width="20"/>
<ellipse cx="2428.6" cy="470" rx="60" ry="30" fill="url(#shad)"/>
<g transform="translate(2358.9 503.4) matrix(0.85 0.53 -0.85 0.53 0 0)"><text x="0" y="10.44" text-anchor="middle" font-family="Liberation Sans" font-weight="bold" font-size="29" fill="#979ba2">S</text></g>
<g transform="translate(2497.3 504.2) matrix(0.85 -0.53 0.85 0.53 0 0)"><text x="0" y="10.44" text-anchor="middle" font-family="Liberation Sans" font-weight="bold" font-size="29" fill="#979ba2">E</text></g>
<g transform="translate(2367.7 423.7) matrix(0.85 -0.53 0.85 0.53 0 0)"><text x="0" y="9.72" text-anchor="middle" font-family="Liberation Sans" font-weight="bold" font-size="27" fill="#979ba2">W</text></g>
<g transform="translate(2487.7 425.4) matrix(-0.85 -0.53 0.85 -0.53 0 0)"><text x="0" y="9.36" text-anchor="middle" font-family="Liberation Sans" font-weight="bold" font-size="26" fill="#979ba2">N</text></g>
<polygon points="2428.6,371.6 2481.3,397.2 2428.6,425.7 2376.3,397.2" fill="#b1b4b9" stroke="#6f737a" stroke-width="0.6"/>
<polygon points="2376.3,397.2 2428.6,425.7 2428.6,486.9 2379.6,455.7" fill="url(#cl)" stroke="#6f737a" stroke-width="0.6"/>
<polygon points="2428.6,425.7 2481.3,397.2 2478,455.7 2428.6,486.9" fill="url(#cr)" stroke="#6f737a" stroke-width="0.6"/>
<polygon points="2428.6,416 2437,420.5 2437,430 2428.6,434.5 2420,430 2420,420.5" fill="#a9b0bd" opacity="0.7"/>
<g font-family="Liberation Sans" font-weight="bold" fill="#585d66"><text x="0" y="0" font-size="13" textLength="26" lengthAdjust="spacingAndGlyphs" transform="translate(2415 396) rotate(26) skewX(-10)">TOP</text><text x="0" y="0" font-size="15" textLength="36" lengthAdjust="spacingAndGlyphs" transform="translate(2386 439) skewY(29)">FRONT</text><text x="0" y="0" font-size="15" textLength="34" lengthAdjust="spacingAndGlyphs" transform="translate(2439 458) skewY(-31)">RIGHT</text></g>
<rect x="2395" y="558" width="68.5" height="24.5" rx="4" fill="#8a8e9a"/>
<text x="2401.50" y="576.5" font-family="Liberation Sans" font-size="16" fill="#4f535c" font-weight="normal" font-style="normal" textLength="33.97" lengthAdjust="spacingAndGlyphs" >WCS</text>
<polygon points="2446,566 2456,566 2451,572" fill="none" stroke="#a9adb8" stroke-width="1"/>
<rect x="2503" y="616" width="45.7" height="310" rx="3" fill="#525862"/>
<g fill="none" stroke="#3f444d" stroke-width="1.6">
<circle cx="2540" cy="623" r="3.8"/>
<path d="M2525.5,641.5 L2537,641.5 Q2541.5,641.5 2541.5,646 L2541.5,657 A16,16 0 1 1 2525.5,641.5 Z"/>
<circle cx="2525.5" cy="657" r="8.6"/>
<line x1="2519" y1="662" x2="2513" y2="668"/><line x1="2532" y1="662" x2="2538" y2="668"/>
<line x1="2506" y1="697.3" x2="2546" y2="697.3" stroke-width="0.8"/>
<path d="M2513,727 Q2507,722 2509,719 Q2512,718 2516,723 L2516,709 Q2517,705 2520,707 L2521,718 L2521,704 Q2523,701 2526,704 L2526,718 L2528,706 Q2531,704 2533,707 L2532,719 L2536,711 Q2539,710 2540,713 L2536,730 Q2532,738 2524,738 Q2518,737 2513,727 Z"/>
<line x1="2509" y1="747" x2="2531" y2="769"/><line x1="2531" y1="747" x2="2509" y2="769"/>
<circle cx="2532" cy="770" r="6.5" fill="#525862"/><line x1="2536.5" y1="774.5" x2="2543" y2="781" stroke-width="3"/>
<ellipse cx="2525" cy="821" rx="17" ry="5.5"/>
<path d="M2522,810 L2522,834 L2529,834 L2529,810 L2533,810 L2525.5,803 L2518,810 Z"/>
<line x1="2506" y1="858.7" x2="2546" y2="858.7" stroke-width="0.8"/>
<rect x="2508.3" y="865.8" width="9.5" height="9.5"/><rect x="2520.3" y="865.8" width="9.5" height="9.5"/><rect x="2532.3" y="865.8" width="9.5" height="9.5"/>
<rect x="2508.3" y="879.5" width="24" height="19.5"/>
<circle cx="2540" cy="917" r="4"/>
</g>
<g fill="#3f444d">
<polygon points="2522.5,686 2530.5,686 2526.5,690"/><polygon points="2522,791 2530,791 2526,795"/><polygon points="2522,847 2530,847 2526,851"/>
<polygon points="2508,747 2508,754 2515,747"/><polygon points="2531,747 2524,747 2531,754"/><polygon points="2508,769 2508,762 2515,769"/>
<polygon points="2511,823 2518,817.5 2518,828.5"/>
<polygon points="2515.5,883.5 2515.5,895 2525.5,889.2"/>
</g>
<path d="M560.3,1296 Q560.3,1290.3 566,1290.3 L597,1290.3 L597,1473.3 L560.3,1473.3 Z" fill="#272d37"/>
<line x1="566" y1="1298.6" x2="592" y2="1298.6" stroke="#b8bcc2" stroke-width="1.5" stroke-dasharray="1.6,2.4"/>
<g stroke="#d0d0d0" stroke-width="2.6"><line x1="572" y1="1319.5" x2="584" y2="1331"/><line x1="584" y1="1319.5" x2="572" y2="1331"/></g>
<path d="M568,1370 L580,1358" stroke="#b0b0b0" stroke-width="3.2" stroke-linecap="round"/><path d="M577,1361 Q575,1352 583,1350 L580,1355 L584,1358 L589,1354 Q588,1362 580,1362" fill="#b0b0b0"/>
<rect x="597" y="1291.6" width="1434" height="150.4" fill="#9b9c9f"/>
<rect x="597" y="1442" width="1434" height="2" fill="#2a2f38"/>
<rect x="597" y="1444" width="1434" height="29.3" fill="#c1c2c4"/>
<text x="601" y="1319" font-family="Liberation Mono" font-size="19.8" fill="#111111" textLength="187.2" lengthAdjust="spacingAndGlyphs" xml:space="preserve">Command: *Cancel*</text>
<text x="601" y="1342" font-family="Liberation Mono" font-size="19.8" fill="#111111" textLength="187.2" lengthAdjust="spacingAndGlyphs" xml:space="preserve">Command: *Cancel*</text>
<text x="601" y="1365" font-family="Liberation Mono" font-size="19.8" fill="#111111" textLength="209.2" lengthAdjust="spacingAndGlyphs" xml:space="preserve">Command: _vscurrent</text>
<text x="601" y="1387.8" font-family="Liberation Mono" font-size="19.8" fill="#111111" textLength="1398.7" lengthAdjust="spacingAndGlyphs" xml:space="preserve">Enter an option [2dwireframe/Wireframe/Hidden/Realistic/Conceptual/Shaded/shaded with Edges/shades of Gray/SKetchy/X-ray/Other]</text>
<text x="601" y="1410.8" font-family="Liberation Mono" font-size="19.8" fill="#111111" textLength="253.3" lengthAdjust="spacingAndGlyphs" xml:space="preserve">&lt;Shaded with edges&gt;: _w</text>
<text x="601" y="1433.8" font-family="Liberation Mono" font-size="19.8" fill="#111111" textLength="88.1" lengthAdjust="spacingAndGlyphs" xml:space="preserve">Command:</text>
<rect x="604.5" y="1451" width="22.5" height="17" fill="none" stroke="#5a5a5a" stroke-width="1.1"/><rect x="604.5" y="1451" width="22.5" height="3.5" fill="#5a5a5a"/>
<path d="M607,1458 L610.5,1461 L607,1464 M611,1465 L616,1465" fill="none" stroke="#5a5a5a" stroke-width="0.9"/>
<polygon points="632,1456.5 642.3,1456.5 637.2,1463" fill="#555"/>
<text x="653" y="1464.5" font-family="Liberation Mono" font-style="italic" font-size="18.2" fill="#6a6a6a" textLength="154.2" lengthAdjust="spacingAndGlyphs" xml:space="preserve">Type a command</text>
<polygon points="2014,1462 2026.8,1462 2020.4,1455.5" fill="#666"/>
<text x="0" y="0" font-family="Liberation Sans" font-size="18" fill="#e8e8e8" textLength="202.5" lengthAdjust="spacingAndGlyphs" transform="translate(28.7 971.8) rotate(-90)">Layer Properties Manager</text>
<polygon points="17.5,1515.6 32.2,1479.7 121.6,1479.7 107,1515.6" fill="#3b4453"/>
<text x="42.50" y="1506" font-family="Liberation Sans" font-size="18" fill="#f5f5f5" font-weight="bold" font-style="normal" textLength="53.38" lengthAdjust="spacingAndGlyphs" >Model</text>
<text x="133.50" y="1506" font-family="Liberation Sans" font-size="18" fill="#e8e8e8" font-weight="normal" font-style="normal" textLength="17.84" lengthAdjust="spacingAndGlyphs" >a3</text>
<line x1="165" y1="1509.4" x2="175.8" y2="1486.7" stroke="#4f5866" stroke-width="1.2"/>
<g stroke="#e0e0e0" stroke-width="2.6"><line x1="190.7" y1="1498.2" x2="209.3" y2="1498.2"/><line x1="200" y1="1489" x2="200" y2="1507.3"/></g>
<line x1="225.5" y1="1509.4" x2="235.8" y2="1486.7" stroke="#4f5866" stroke-width="1.2"/>
<rect x="1684" y="1484.2" width="72" height="35.5" fill="#3b4453" />
<rect x="1762" y="1484.2" width="96" height="35.5" fill="#3b4453" />
<rect x="1864" y="1484.2" width="35.59999999999991" height="35.5" fill="#3b4453" />
<rect x="1902" y="1484.2" width="156" height="35.5" fill="#3b4453" />
<rect x="2163" y="1484.2" width="157" height="35.5" fill="#3b4453" />
<rect x="2326" y="1484.2" width="60" height="35.5" fill="#3b4453" />
<rect x="2388" y="1484.2" width="36" height="35.5" fill="#3b4453" />
<rect x="2430" y="1484.2" width="36" height="35.5" fill="#3b4453" />
<rect x="2470" y="1484.2" width="4" height="35.5" fill="#3b4453" />
<rect x="2478" y="1484.2" width="72" height="35.5" fill="#3b4453" />
<rect x="2061" y="1484.2" width="70" height="35.5" fill="#3b4453" />
<rect x="2131" y="1484.2" width="25" height="35.5" fill="#3b4453" />
<rect x="2061" y="1485" width="33.6" height="34" fill="#5e8fc8" />
<rect x="2097" y="1485" width="34" height="34" fill="#5e8fc8" />
<rect x="2163" y="1485" width="34" height="34" fill="#5e8fc8" />
<text x="1690.30" y="1509" font-family="Liberation Sans" font-size="18" fill="#f5f5f5" font-weight="normal" font-style="normal" textLength="61.02" lengthAdjust="spacingAndGlyphs" >MODEL</text>
<g stroke="#dcdcdc" stroke-width="1.2" fill="none">
<line x1="1768" y1="1494.5" x2="1791" y2="1494.5"/><line x1="1768" y1="1501" x2="1791" y2="1501"/><line x1="1768" y1="1507.5" x2="1791" y2="1507.5"/>
<line x1="1773.5" y1="1490" x2="1773.5" y2="1513"/><line x1="1779.5" y1="1490" x2="1779.5" y2="1513"/><line x1="1785.5" y1="1490" x2="1785.5" y2="1513"/>
<line x1="1872" y1="1494.5" x2="1880" y2="1494.5"/><line x1="1876" y1="1490" x2="1876" y2="1499"/>
<rect x="1879.5" y="1505" width="14" height="5.5" fill="#dcdcdc"/>
<path d="M1908,1490 L1908,1513.5 L1932,1513.5 M1908,1507 L1915,1507 L1915,1513.5"/>
<circle cx="1953.5" cy="1504.5" r="9"/><path d="M1952.5,1502 L1962,1492.5 M1952.5,1502 L1968,1502"/>
</g>
<g fill="#dcdcdc"><rect x="1807" y="1493" width="3" height="3"/><rect x="1807" y="1500" width="3" height="3"/><rect x="1807" y="1507" width="3" height="3"/><rect x="1814" y="1493" width="3" height="3"/><rect x="1814" y="1500" width="3" height="3"/><rect x="1814" y="1507" width="3" height="3"/><rect x="1821" y="1493" width="3" height="3"/><rect x="1821" y="1500" width="3" height="3"/><rect x="1821" y="1507" width="3" height="3"/></g>
<line x1="2008" y1="1496" x2="2024" y2="1512" stroke="#e05050" stroke-width="1.1"/><line x1="2016" y1="1490" x2="2016" y2="1512" stroke="#50d050" stroke-width="1.1"/><rect x="2013.5" y="1499.5" width="5" height="5" fill="none" stroke="#eee" stroke-width="1"/>

<polygon points="1840.25,1499.5 1851.75,1499.5 1846,1505.0" fill="#dcdcdc"/>
<polygon points="1980.25,1499.5 1991.75,1499.5 1986,1505.0" fill="#dcdcdc"/>
<polygon points="2039.95,1499.5 2051.45,1499.5 2045.7,1505.0" fill="#dcdcdc"/>
<polygon points="2137.75,1499.5 2149.25,1499.5 2143.5,1505.0" fill="#dcdcdc"/>
<polygon points="2302.25,1499.5 2313.75,1499.5 2308,1505.0" fill="#dcdcdc"/>
<polygon points="2368.25,1499.5 2379.75,1499.5 2374,1505.0" fill="#dcdcdc"/>
<g stroke="#f2f2f2" stroke-width="1.3" fill="none">
<path d="M2066,1515 L2086,1500 M2066,1515 L2090,1515"/>
<rect x="2101" y="1492.5" width="4.5" height="4.5"/><rect x="2104" y="1496" width="23" height="19"/>
</g>
<rect x="2074" y="1505.5" width="5" height="5" fill="#f2f2f2"/>
<g fill="#f2f2f2">
<polygon points="2169,1517 2176,1492 2183,1517 2176,1510"/>
</g>
<circle cx="2187.5" cy="1494.5" r="3.5" fill="none" stroke="#f2f2f2" stroke-width="1.3"/>
<g fill="#d8d8d8">
<polygon points="2204,1514 2212,1490 2220,1514 2212,1507"/>
<polygon points="2242,1514 2250,1490 2258,1514 2250,1507"/>
</g>
<polygon points="2223,1491 2219,1498 2222,1498 2219,1504 2225,1496 2222,1496" fill="#d8d8d8"/>

<text x="2278.00" y="1509" font-family="Liberation Sans" font-size="18" fill="#f0f0f0" font-weight="normal" font-style="normal" textLength="17.60" lengthAdjust="spacingAndGlyphs" >1:1</text>
<polygon points="2355.98,1499.67 2355.98,1504.33 2351.95,1505.29 2354.11,1508.82 2350.82,1512.11 2347.29,1509.95 2346.33,1513.98 2341.67,1513.98 2340.71,1509.95 2337.18,1512.11 2333.89,1508.82 2336.05,1505.29 2332.02,1504.33 2332.02,1499.67 2336.05,1498.71 2333.89,1495.18 2337.18,1491.89 2340.71,1494.05 2341.67,1490.02 2346.33,1490.02 2347.29,1494.05 2350.82,1491.89 2354.11,1495.18 2351.95,1498.71 " fill="#dcdcdc"/><circle cx="2344" cy="1502" r="4" fill="#3b4453"/>
<g stroke="#dcdcdc" stroke-width="2.4"><line x1="2394" y1="1501.5" x2="2417" y2="1501.5"/><line x1="2405.5" y1="1490" x2="2405.5" y2="1513.3"/></g>
<g stroke="#dcdcdc" stroke-width="1.2" fill="none">
<rect x="2436" y="1490.5" width="9.5" height="9.5"/><circle cx="2454.5" cy="1501" r="5.2"/><polygon points="2440.5,1504.5 2445.5,1513.5 2435.5,1513.5"/>
<rect x="2484" y="1493" width="24" height="17.5"/><path d="M2487,1508 L2494,1501 M2487,1508 L2487,1503 M2487,1508 L2492,1508 M2505,1495.5 L2498,1502.5 M2505,1495.5 L2500,1495.5 M2505,1495.5 L2505,1500.5"/>
</g>
<g fill="#dcdcdc"><rect x="2519.6" y="1491" width="24.4" height="3"/><rect x="2519.6" y="1500.2" width="24.4" height="3"/><rect x="2519.6" y="1509" width="24.4" height="3"/></g>

</svg></body></html>
